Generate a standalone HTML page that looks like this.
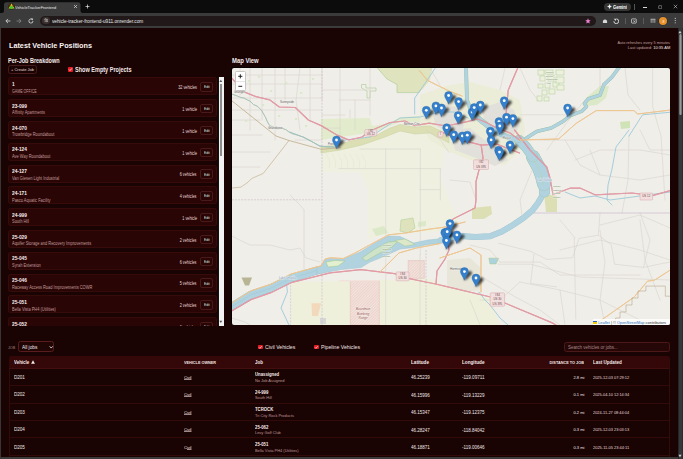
<!DOCTYPE html>
<html><head><meta charset="utf-8">
<style>
*{box-sizing:border-box;margin:0;padding:0}
html,body{width:683px;height:459px;overflow:hidden;background:#190303;font-family:"Liberation Sans",sans-serif}
.a{position:absolute;white-space:nowrap;line-height:1}
.b{font-weight:bold}
</style></head><body>
<div class="a" style="left:0.00px;top:0.00px;width:683.00px;height:13.20px;background:#0c0c0c"></div>
<div class="a" style="left:0.00px;top:13.00px;width:683.00px;height:15.00px;background:#3b3b3b"></div>
<svg class="a" style="left:0;top:0" width="100" height="14" viewBox="0 0 100 14"><path d="M1,13.2 Q4,13.2 4,10.5 L4,4.5 Q4,2.2 6.5,2.2 L78,2.2 Q80.5,2.2 80.5,4.5 L80.5,10.5 Q80.5,13.2 83.5,13.2 Z" fill="#3b3b3b"/></svg>
<svg class="a" style="left:8.2px;top:3.2px" width="7" height="7" viewBox="0 0 10 10"><circle cx="5" cy="5" r="4.8" fill="#2c2c12"/><path d="M5,0.6 L9.2,8 L0.8,8 Z" fill="#e0c020"/><circle cx="5" cy="6.2" r="2.3" fill="#3ccc30"/><path d="M2,2.5 L4,4.5 M8,2.5 L6,4.5" stroke="#c03030" stroke-width="1"/></svg>
<div class="a" style="left:14.60px;top:5.60px;font-size:4.3px;font-weight:normal;color:#e8e8e8;transform-origin:left center;transform:scaleX(0.908);">VehicleTrackerFrontend</div>
<svg class="a" style="left:73.2px;top:4.3px" width="5" height="5" viewBox="0 0 10 10"><path d="M2,2 L8,8 M8,2 L2,8" stroke="#d8d8d8" stroke-width="1.4"/></svg>
<svg class="a" style="left:84.8px;top:4.1px" width="5" height="5" viewBox="0 0 10 10"><path d="M5,1 L5,9 M1,5 L9,5" stroke="#e8e8e8" stroke-width="1.4"/></svg>
<div class="a" style="left:604.40px;top:2.50px;width:26.40px;height:8.30px;background:#363636;border-radius:4px"></div>
<svg class="a" style="left:607.2px;top:4.1px" width="5.2" height="5.2" viewBox="0 0 10 10"><path d="M5,0 Q5.6,4.4 10,5 Q5.6,5.6 5,10 Q4.4,5.6 0,5 Q4.4,4.4 5,0Z" fill="#f0f0f0"/></svg>
<div class="a" style="left:613.20px;top:6.14px;font-size:4.7px;font-weight:bold;color:#ffffff;transform-origin:left center;transform:scaleX(0.875);">Gemini</div>
<div class="a" style="left:634.30px;top:4.00px;width:0.50px;height:5.50px;background:#555"></div>
<div class="a" style="left:643.00px;top:6.50px;width:4.00px;height:0.35px;background:#d8d8d8"></div>
<svg class="a" style="left:657.8px;top:4.5px" width="4.4" height="4.4" viewBox="0 0 10 10"><rect x="1.5" y="1.5" width="7" height="7" rx="1" fill="none" stroke="#d8d8d8" stroke-width="1"/></svg>
<svg class="a" style="left:672.5px;top:4.2px" width="5" height="5" viewBox="0 0 10 10"><path d="M1.5,1.5 L8.5,8.5 M8.5,1.5 L1.5,8.5" stroke="#d8d8d8" stroke-width="1.1"/></svg>
<svg class="a" style="left:4.5px;top:17.7px" width="6" height="6" viewBox="0 0 10 10"><path d="M9,5 L1.5,5 M5,1.5 L1.5,5 L5,8.5" fill="none" stroke="#e0e0e0" stroke-width="1.3"/></svg>
<svg class="a" style="left:16.3px;top:17.7px" width="6" height="6" viewBox="0 0 10 10"><path d="M1,5 L8.5,5 M5,1.5 L8.5,5 L5,8.5" fill="none" stroke="#8a8a8a" stroke-width="1.3"/></svg>
<svg class="a" style="left:28.2px;top:17.7px" width="6" height="6" viewBox="0 0 10 10"><path d="M8.3,5 A3.4,3.4 0 1 1 6.6,2.1" fill="none" stroke="#e0e0e0" stroke-width="1.3"/><path d="M5.2,0.3 L8.8,1.2 L7,4.2 Z" fill="#e0e0e0"/></svg>
<div class="a" style="left:40.40px;top:15.70px;width:555.30px;height:10.10px;background:#211919;border-radius:5px"></div>
<div class="a" style="left:41.80px;top:16.60px;width:7.80px;height:7.80px;background:#3a3030;border-radius:50%"></div>
<svg class="a" style="left:43.5px;top:18.4px" width="4.5" height="4.5" viewBox="0 0 10 10"><path d="M1,3 L9,3 M1,7 L9,7" stroke="#e0e0e0" stroke-width="1.2"/><circle cx="3.5" cy="3" r="1.5" fill="#3a3030" stroke="#e0e0e0" stroke-width="1"/><circle cx="6.5" cy="7" r="1.5" fill="#3a3030" stroke="#e0e0e0" stroke-width="1"/></svg>
<div class="a" style="left:51.80px;top:20.31px;font-size:4.8px;font-weight:normal;color:#ececec;transform-origin:left center;transform:scaleX(0.981);">vehicle-tracker-frontend-u911.onrender.com</div>
<svg class="a" style="left:584.5px;top:17.9px" width="6" height="6" viewBox="0 0 10 10"><path d="M5,0.5 L6.3,3.6 L9.6,3.8 L7,6 L7.9,9.3 L5,7.5 L2.1,9.3 L3,6 L0.4,3.8 L3.7,3.6 Z" fill="#f383d4"/></svg>
<svg class="a" style="left:601.5px;top:17.9px" width="6" height="6" viewBox="0 0 10 10"><path d="M1.5,8.5 L1.5,4.5 Q5,0.5 8.5,4.5 L8.5,8.5 Z" fill="#d8d8d8"/></svg>
<svg class="a" style="left:612.5px;top:17.6px" width="6.5" height="6.5" viewBox="0 0 10 10"><path d="M5,1.3 A3.7,3.7 0 1 1 1.3,5" fill="none" stroke="#e0e0e0" stroke-width="1.4"/><path d="M1,1 L4.5,1 L4.5,4.5 Z" fill="#e0e0e0"/></svg>
<div class="a" style="left:624.60px;top:18.00px;width:0.50px;height:5.50px;background:#5a5a5a"></div>
<svg class="a" style="left:630.5px;top:17.8px" width="6" height="6" viewBox="0 0 10 10"><rect x="0.8" y="1.5" width="8" height="7" rx="1" fill="none" stroke="#e0e0e0" stroke-width="1.2"/><path d="M4,4 L7,7 M7,4 L4,7" stroke="#e0e0e0" stroke-width="1"/></svg>
<div class="a" style="left:642.70px;top:18.00px;width:0.50px;height:5.50px;background:#5a5a5a"></div>
<svg class="a" style="left:649.5px;top:17.8px" width="6" height="6" viewBox="0 0 10 10"><path d="M1,2 L9,2 M2,2 L2,8 M5,2 L5,8 M8,2 L8,8" stroke="#d8d8d8" stroke-width="1.1"/></svg>
<div class="a" style="left:659.30px;top:16.60px;width:8.20px;height:8.20px;background:#e8912c;border-radius:50%;box-shadow:0 0 0 0.6px #1c2a3a"></div>
<div class="a" style="left:662.50px;top:20.80px;font-size:3.3px;font-weight:normal;color:#fff2e0;transform-origin:left center;transform:scaleX(1.000);">8</div>
<svg class="a" style="left:673.8px;top:17.4px" width="2.5" height="7" viewBox="0 0 4 10"><circle cx="2" cy="1.5" r="0.9" fill="#ddd"/><circle cx="2" cy="5" r="0.9" fill="#ddd"/><circle cx="2" cy="8.5" r="0.9" fill="#ddd"/></svg>
<div class="a" style="left:0.00px;top:28.00px;width:683.00px;height:431.00px;background:#190303"></div>
<div class="a" style="left:0.00px;top:28.00px;width:1.20px;height:431.00px;background:#3a3434"></div>
<div class="a" style="left:677.90px;top:28.00px;width:5.10px;height:431.00px;background:linear-gradient(90deg,#1c1c1c,#343838 30%,#343838 80%,#222)"></div>
<div class="a" style="left:678.90px;top:34.20px;width:3.60px;height:81.00px;background:linear-gradient(90deg,#5a5a5a,#9a9a9a 45%,#9a9a9a 55%,#5a5a5a);border-radius:1.8px"></div>
<svg class="a" style="left:678.4px;top:29.5px" width="4" height="4" viewBox="0 0 10 10"><path d="M5,2 L9,8 L1,8 Z" fill="#cfcfcf"/></svg>
<svg class="a" style="left:678.4px;top:453.5px" width="4" height="4" viewBox="0 0 10 10"><path d="M5,8 L9,2 L1,2 Z" fill="#cfcfcf"/></svg>
<div class="a" style="left:8.50px;top:42.00px;font-size:8.0px;font-weight:bold;color:#faf4f4;transform-origin:left center;transform:scaleX(0.906);">Latest Vehicle Positions</div>
<div class="a" style="right:12.60px;top:41.10px;font-size:4.2px;font-weight:normal;color:#c4a2a2;transform-origin:right center;transform:scaleX(0.906);">Auto refreshes every 5 minutes</div>
<div class="a" style="right:12.60px;top:46.30px;font-size:4.2px;font-weight:normal;color:#c4a2a2;transform-origin:right center;transform:scaleX(0.960);">Last updated: <span style="color:#f0e4e4">10:35 AM</span></div>
<div class="a" style="left:8.40px;top:58.10px;font-size:6.3px;font-weight:bold;color:#f6ecec;transform-origin:left center;transform:scaleX(0.871);">Per-Job Breakdown</div>
<div class="a" style="left:231.60px;top:58.15px;font-size:6.3px;font-weight:bold;color:#f6ecec;transform-origin:left center;transform:scaleX(0.934);">Map View</div>
<div class="a" style="left:8.40px;top:64.70px;width:29.00px;height:8.90px;border:0.8px solid #4a1a1a;border-radius:2.5px"></div>
<div class="a" style="left:11.40px;top:69.40px;font-size:3.8px;font-weight:normal;color:#eadede;transform-origin:left center;transform:scaleX(1.052);">+ Create Job</div>
<div class="a" style="left:68.20px;top:67.10px;width:4.90px;height:4.90px;background:#e31b23;border-radius:0.8px"></div>
<svg class="a" style="left:68.2px;top:67.1px" width="4.9" height="4.9" viewBox="0 0 10 10"><path d="M2.2,5.2 L4.2,7.2 L8,2.8" fill="none" stroke="#fff" stroke-width="1.5"/></svg>
<div class="a" style="left:75.20px;top:67.05px;font-size:6.4px;font-weight:bold;color:#f2e8e8;transform-origin:left center;transform:scaleX(0.865);">Show Empty Projects</div>
<div class="a" style="left:0;top:77px;width:230px;height:248.8px;overflow:hidden">
<div class="a" style="left:7.9px;top:0.30px;width:208.7px;height:18.1px;background:#290505;border:0.7px solid #380b0b;border-radius:2.2px"></div>
<div class="a" style="left:12.30px;top:6.09px;font-size:4.9px;font-weight:bold;color:#f6eeee;transform-origin:left center;transform:scaleX(0.980);">1</div>
<div class="a" style="left:12.30px;top:12.64px;font-size:4.55px;font-weight:normal;color:#c29a9a;transform-origin:left center;transform:scaleX(0.790);">GAME OFFICE</div>
<div class="a" style="right:33.20px;top:9.11px;font-size:4.6px;font-weight:normal;color:#eadada;transform-origin:right center;transform:scaleX(0.817);">32 vehicles</div>
<div class="a" style="left:200.4px;top:5.10px;width:12.9px;height:9.5px;border:0.9px solid #4a1a1a;border-radius:2px"></div>
<div class="a" style="left:204.10px;top:8.30px;font-size:4.0px;font-weight:normal;color:#dce8e8;transform-origin:left center;transform:scaleX(0.820);">Edit</div>
<div class="a" style="left:7.9px;top:22.10px;width:208.7px;height:18.1px;background:#290505;border:0.7px solid #380b0b;border-radius:2.2px"></div>
<div class="a" style="left:12.30px;top:27.89px;font-size:4.9px;font-weight:bold;color:#f6eeee;transform-origin:left center;transform:scaleX(0.980);">23-099</div>
<div class="a" style="left:12.30px;top:34.44px;font-size:4.55px;font-weight:normal;color:#c29a9a;transform-origin:left center;transform:scaleX(0.870);">Affinity Apartments</div>
<div class="a" style="right:33.20px;top:30.91px;font-size:4.6px;font-weight:normal;color:#eadada;transform-origin:right center;transform:scaleX(0.817);">1 vehicle</div>
<div class="a" style="left:200.4px;top:26.90px;width:12.9px;height:9.5px;border:0.9px solid #4a1a1a;border-radius:2px"></div>
<div class="a" style="left:204.10px;top:30.10px;font-size:4.0px;font-weight:normal;color:#dce8e8;transform-origin:left center;transform:scaleX(0.820);">Edit</div>
<div class="a" style="left:7.9px;top:43.90px;width:208.7px;height:18.1px;background:#290505;border:0.7px solid #380b0b;border-radius:2.2px"></div>
<div class="a" style="left:12.30px;top:49.69px;font-size:4.9px;font-weight:bold;color:#f6eeee;transform-origin:left center;transform:scaleX(0.980);">24-070</div>
<div class="a" style="left:12.30px;top:56.24px;font-size:4.55px;font-weight:normal;color:#c29a9a;transform-origin:left center;transform:scaleX(0.870);">Trowbridge Roundabout</div>
<div class="a" style="right:33.20px;top:52.71px;font-size:4.6px;font-weight:normal;color:#eadada;transform-origin:right center;transform:scaleX(0.817);">1 vehicle</div>
<div class="a" style="left:200.4px;top:48.70px;width:12.9px;height:9.5px;border:0.9px solid #4a1a1a;border-radius:2px"></div>
<div class="a" style="left:204.10px;top:51.90px;font-size:4.0px;font-weight:normal;color:#dce8e8;transform-origin:left center;transform:scaleX(0.820);">Edit</div>
<div class="a" style="left:7.9px;top:65.70px;width:208.7px;height:18.1px;background:#290505;border:0.7px solid #380b0b;border-radius:2.2px"></div>
<div class="a" style="left:12.30px;top:71.49px;font-size:4.9px;font-weight:bold;color:#f6eeee;transform-origin:left center;transform:scaleX(0.980);">24-124</div>
<div class="a" style="left:12.30px;top:78.04px;font-size:4.55px;font-weight:normal;color:#c29a9a;transform-origin:left center;transform:scaleX(0.870);">Ave Way Roundabout</div>
<div class="a" style="right:33.20px;top:74.51px;font-size:4.6px;font-weight:normal;color:#eadada;transform-origin:right center;transform:scaleX(0.817);">1 vehicle</div>
<div class="a" style="left:200.4px;top:70.50px;width:12.9px;height:9.5px;border:0.9px solid #4a1a1a;border-radius:2px"></div>
<div class="a" style="left:204.10px;top:73.70px;font-size:4.0px;font-weight:normal;color:#dce8e8;transform-origin:left center;transform:scaleX(0.820);">Edit</div>
<div class="a" style="left:7.9px;top:87.50px;width:208.7px;height:18.1px;background:#290505;border:0.7px solid #380b0b;border-radius:2.2px"></div>
<div class="a" style="left:12.30px;top:93.29px;font-size:4.9px;font-weight:bold;color:#f6eeee;transform-origin:left center;transform:scaleX(0.980);">24-127</div>
<div class="a" style="left:12.30px;top:99.84px;font-size:4.55px;font-weight:normal;color:#c29a9a;transform-origin:left center;transform:scaleX(0.870);">Van Giesen Light Industrial</div>
<div class="a" style="right:33.20px;top:96.31px;font-size:4.6px;font-weight:normal;color:#eadada;transform-origin:right center;transform:scaleX(0.817);">6 vehicles</div>
<div class="a" style="left:200.4px;top:92.30px;width:12.9px;height:9.5px;border:0.9px solid #4a1a1a;border-radius:2px"></div>
<div class="a" style="left:204.10px;top:95.50px;font-size:4.0px;font-weight:normal;color:#dce8e8;transform-origin:left center;transform:scaleX(0.820);">Edit</div>
<div class="a" style="left:7.9px;top:109.30px;width:208.7px;height:18.1px;background:#290505;border:0.7px solid #380b0b;border-radius:2.2px"></div>
<div class="a" style="left:12.30px;top:115.09px;font-size:4.9px;font-weight:bold;color:#f6eeee;transform-origin:left center;transform:scaleX(0.980);">24-171</div>
<div class="a" style="left:12.30px;top:121.64px;font-size:4.55px;font-weight:normal;color:#c29a9a;transform-origin:left center;transform:scaleX(0.870);">Pasco Aquatic Facility</div>
<div class="a" style="right:33.20px;top:118.11px;font-size:4.6px;font-weight:normal;color:#eadada;transform-origin:right center;transform:scaleX(0.817);">4 vehicles</div>
<div class="a" style="left:200.4px;top:114.10px;width:12.9px;height:9.5px;border:0.9px solid #4a1a1a;border-radius:2px"></div>
<div class="a" style="left:204.10px;top:117.30px;font-size:4.0px;font-weight:normal;color:#dce8e8;transform-origin:left center;transform:scaleX(0.820);">Edit</div>
<div class="a" style="left:7.9px;top:131.10px;width:208.7px;height:18.1px;background:#290505;border:0.7px solid #380b0b;border-radius:2.2px"></div>
<div class="a" style="left:12.30px;top:136.89px;font-size:4.9px;font-weight:bold;color:#f6eeee;transform-origin:left center;transform:scaleX(0.980);">24-999</div>
<div class="a" style="left:12.30px;top:143.44px;font-size:4.55px;font-weight:normal;color:#c29a9a;transform-origin:left center;transform:scaleX(0.870);">South Hill</div>
<div class="a" style="right:33.20px;top:139.91px;font-size:4.6px;font-weight:normal;color:#eadada;transform-origin:right center;transform:scaleX(0.817);">1 vehicle</div>
<div class="a" style="left:200.4px;top:135.90px;width:12.9px;height:9.5px;border:0.9px solid #4a1a1a;border-radius:2px"></div>
<div class="a" style="left:204.10px;top:139.10px;font-size:4.0px;font-weight:normal;color:#dce8e8;transform-origin:left center;transform:scaleX(0.820);">Edit</div>
<div class="a" style="left:7.9px;top:152.90px;width:208.7px;height:18.1px;background:#290505;border:0.7px solid #380b0b;border-radius:2.2px"></div>
<div class="a" style="left:12.30px;top:158.69px;font-size:4.9px;font-weight:bold;color:#f6eeee;transform-origin:left center;transform:scaleX(0.980);">25-029</div>
<div class="a" style="left:12.30px;top:165.24px;font-size:4.55px;font-weight:normal;color:#c29a9a;transform-origin:left center;transform:scaleX(0.870);">Aquifer Storage and Recovery Improvements</div>
<div class="a" style="right:33.20px;top:161.71px;font-size:4.6px;font-weight:normal;color:#eadada;transform-origin:right center;transform:scaleX(0.817);">2 vehicles</div>
<div class="a" style="left:200.4px;top:157.70px;width:12.9px;height:9.5px;border:0.9px solid #4a1a1a;border-radius:2px"></div>
<div class="a" style="left:204.10px;top:160.90px;font-size:4.0px;font-weight:normal;color:#dce8e8;transform-origin:left center;transform:scaleX(0.820);">Edit</div>
<div class="a" style="left:7.9px;top:174.70px;width:208.7px;height:18.1px;background:#290505;border:0.7px solid #380b0b;border-radius:2.2px"></div>
<div class="a" style="left:12.30px;top:180.49px;font-size:4.9px;font-weight:bold;color:#f6eeee;transform-origin:left center;transform:scaleX(0.980);">25-045</div>
<div class="a" style="left:12.30px;top:187.04px;font-size:4.55px;font-weight:normal;color:#c29a9a;transform-origin:left center;transform:scaleX(0.870);">Syrah Extension</div>
<div class="a" style="right:33.20px;top:183.51px;font-size:4.6px;font-weight:normal;color:#eadada;transform-origin:right center;transform:scaleX(0.817);">6 vehicles</div>
<div class="a" style="left:200.4px;top:179.50px;width:12.9px;height:9.5px;border:0.9px solid #4a1a1a;border-radius:2px"></div>
<div class="a" style="left:204.10px;top:182.70px;font-size:4.0px;font-weight:normal;color:#dce8e8;transform-origin:left center;transform:scaleX(0.820);">Edit</div>
<div class="a" style="left:7.9px;top:196.50px;width:208.7px;height:18.1px;background:#290505;border:0.7px solid #380b0b;border-radius:2.2px"></div>
<div class="a" style="left:12.30px;top:202.29px;font-size:4.9px;font-weight:bold;color:#f6eeee;transform-origin:left center;transform:scaleX(0.980);">25-046</div>
<div class="a" style="left:12.30px;top:208.84px;font-size:4.55px;font-weight:normal;color:#c29a9a;transform-origin:left center;transform:scaleX(0.870);">Raceway Access Road Improvements COWR</div>
<div class="a" style="right:33.20px;top:205.31px;font-size:4.6px;font-weight:normal;color:#eadada;transform-origin:right center;transform:scaleX(0.817);">5 vehicles</div>
<div class="a" style="left:200.4px;top:201.30px;width:12.9px;height:9.5px;border:0.9px solid #4a1a1a;border-radius:2px"></div>
<div class="a" style="left:204.10px;top:204.50px;font-size:4.0px;font-weight:normal;color:#dce8e8;transform-origin:left center;transform:scaleX(0.820);">Edit</div>
<div class="a" style="left:7.9px;top:218.30px;width:208.7px;height:18.1px;background:#290505;border:0.7px solid #380b0b;border-radius:2.2px"></div>
<div class="a" style="left:12.30px;top:224.09px;font-size:4.9px;font-weight:bold;color:#f6eeee;transform-origin:left center;transform:scaleX(0.980);">25-051</div>
<div class="a" style="left:12.30px;top:230.64px;font-size:4.55px;font-weight:normal;color:#c29a9a;transform-origin:left center;transform:scaleX(0.870);">Bella Vista PH4 (Utilities)</div>
<div class="a" style="right:33.20px;top:227.11px;font-size:4.6px;font-weight:normal;color:#eadada;transform-origin:right center;transform:scaleX(0.817);">2 vehicles</div>
<div class="a" style="left:200.4px;top:223.10px;width:12.9px;height:9.5px;border:0.9px solid #4a1a1a;border-radius:2px"></div>
<div class="a" style="left:204.10px;top:226.30px;font-size:4.0px;font-weight:normal;color:#dce8e8;transform-origin:left center;transform:scaleX(0.820);">Edit</div>
<div class="a" style="left:7.9px;top:240.10px;width:208.7px;height:18.1px;background:#290505;border:0.7px solid #380b0b;border-radius:2.2px"></div>
<div class="a" style="left:12.30px;top:245.89px;font-size:4.9px;font-weight:bold;color:#f6eeee;transform-origin:left center;transform:scaleX(0.980);">25-052</div>
<div class="a" style="left:12.30px;top:252.44px;font-size:4.55px;font-weight:normal;color:#c29a9a;transform-origin:left center;transform:scaleX(0.870);">Columbia Park Trail</div>
<div class="a" style="right:33.20px;top:248.91px;font-size:4.6px;font-weight:normal;color:#eadada;transform-origin:right center;transform:scaleX(0.817);">6 vehicles</div>
<div class="a" style="left:200.4px;top:244.90px;width:12.9px;height:9.5px;border:0.9px solid #4a1a1a;border-radius:2px"></div>
<div class="a" style="left:204.10px;top:248.10px;font-size:4.0px;font-weight:normal;color:#dce8e8;transform-origin:left center;transform:scaleX(0.820);">Edit</div>
<div class="a" style="left:218.1px;top:0;width:6.2px;height:248.8px;background:#111"></div>
<div class="a" style="left:218.5px;top:0;width:5.4px;height:248.8px;background:#f2f2f2"></div>
<div class="a" style="left:220.2px;top:7.4px;width:2.3px;height:71.8px;background:#8c8c8c"></div>
<svg class="a" style="left:219.4px;top:1.6px" width="3.6" height="3.6" viewBox="0 0 10 10"><path d="M5,2 L9,8 L1,8 Z" fill="#505050"/></svg>
<svg class="a" style="left:219.4px;top:243.4px" width="3.6" height="3.6" viewBox="0 0 10 10"><path d="M5,8 L9,2 L1,2 Z" fill="#505050"/></svg>
</div>
<div class="a" style="left:231.2px;top:66.9px;width:439.2px;height:258.2px;background:#060000;border-radius:2.5px"></div>
<div class="a" id="map" style="left:231.8px;top:67.5px;width:438px;height:257px;background:#f0eee9;border-radius:2px;overflow:hidden"><svg style="position:absolute;left:-231.8px;top:-67.5px" width="683" height="459" viewBox="0 0 683 459" font-family="Liberation Sans"><defs><filter id="blur" x="-50%" y="-50%" width="200%" height="200%"><feGaussianBlur stdDeviation="0.9"/></filter><pattern id="hatch" width="2" height="2" patternUnits="userSpaceOnUse" patternTransform="rotate(45)"><rect width="2" height="2" fill="#f3e4de"/><rect width="0.6" height="2" fill="#e8c8c0"/></pattern></defs><path d="M321.0,147.0 L360.0,140.0 L400.0,125.0 L430.0,127.0 L449.0,133.0 L445.0,150.0 L440.0,175.0 L449.0,200.0 L460.0,222.0 L440.0,232.0 L400.0,233.0 L380.0,236.0 L368.0,240.0 L368.0,190.0 L360.0,172.0 L321.0,172.0 Z" fill="#eff0e0" stroke="none" stroke-width="0" />
<path d="M290.6,282.0 L430.0,279.0 L449.0,287.0 L470.0,292.0 L490.0,298.0 L500.0,325.0 L290.6,325.0 Z" fill="#eff0dc" stroke="none" stroke-width="0" />
<path d="M321.0,119.0 L370.0,118.0 L372.0,126.0 L390.0,123.0 L400.0,117.0 L420.0,116.0 L430.0,104.0 L425.0,95.0 L440.0,90.0 L449.0,95.0 L440.0,115.0 L430.0,123.0 L400.0,122.0 L380.0,130.0 L362.0,134.0 L340.0,137.0 L321.0,140.0 Z" fill="#e3ebcd" stroke="none" stroke-width="0" />
<path d="M420.0,95.0 L445.0,86.0 L470.0,82.0 L500.0,90.0 L520.0,100.0 L525.0,130.0 L520.0,150.0 L505.0,165.0 L470.0,160.0 L450.0,152.0 L430.0,140.0 L420.0,125.0 Z" fill="#ecedd8" stroke="none" stroke-width="0" />
<path d="M432.0,112.0 L445.0,104.0 L458.0,108.0 L466.0,120.0 L462.0,130.0 L448.0,132.0 L436.0,126.0 Z" fill="#e2e0da" stroke="none" stroke-width="0" />
<path d="M450.0,130.0 L470.0,128.0 L482.0,138.0 L500.0,150.0 L508.0,160.0 L495.0,166.0 L476.0,158.0 L455.0,150.0 Z" fill="#e2e0da" stroke="none" stroke-width="0" />
<path d="M482.0,108.0 L500.0,102.0 L514.0,110.0 L520.0,126.0 L510.0,140.0 L496.0,138.0 L485.0,125.0 Z" fill="#e2e0da" stroke="none" stroke-width="0" />
<path d="M447.0,260.0 L470.0,258.0 L481.0,268.0 L481.0,290.0 L465.0,292.0 L447.0,285.0 Z" fill="#e7e6d8" stroke="none" stroke-width="0" />
<path d="M321.0,147.0 L340.0,144.0 L355.0,140.0 L375.0,136.0 L390.0,128.0 L400.0,124.5 L415.0,127.0 L430.0,126.0 L445.0,133.0 L449.0,138.0 L449.0,143.0 L430.0,133.0 L415.0,134.0 L400.0,131.0 L385.0,137.0 L362.0,145.0 L340.0,150.0 L321.0,153.0 Z" fill="#dcdfb4" stroke="#c7d09c" stroke-width="0.5" />
<path d="M326.0,153.0 L330.0,162.0 L329.0,168.0" fill="none" stroke="#e2e4c6" stroke-width="0.45" stroke-linejoin="round" stroke-linecap="round" />
<path d="M332.0,153.3 L336.0,162.0 L335.0,168.0" fill="none" stroke="#e2e4c6" stroke-width="0.45" stroke-linejoin="round" stroke-linecap="round" />
<path d="M338.0,153.6 L342.0,162.0 L341.0,168.0" fill="none" stroke="#e2e4c6" stroke-width="0.45" stroke-linejoin="round" stroke-linecap="round" />
<path d="M344.0,153.9 L348.0,162.0 L347.0,168.0" fill="none" stroke="#e2e4c6" stroke-width="0.45" stroke-linejoin="round" stroke-linecap="round" />
<path d="M350.0,154.2 L354.0,162.0 L353.0,168.0" fill="none" stroke="#e2e4c6" stroke-width="0.45" stroke-linejoin="round" stroke-linecap="round" />
<path d="M356.0,154.5 L360.0,162.0 L359.0,168.0" fill="none" stroke="#e2e4c6" stroke-width="0.45" stroke-linejoin="round" stroke-linecap="round" />
<path d="M362.0,154.8 L366.0,162.0 L365.0,168.0" fill="none" stroke="#e2e4c6" stroke-width="0.45" stroke-linejoin="round" stroke-linecap="round" />
<path d="M377.0,67.5 L432.0,67.5 L426.0,81.0 L419.0,92.6 L397.0,92.6 L397.0,84.5 L387.0,79.0 Z" fill="#dfe3be" stroke="#a9c98e" stroke-width="0.6" />
<path d="M415.0,67.5 L432.0,67.5 L430.0,80.0 L422.0,90.0 L415.0,88.0 Z" fill="#dfe3be" stroke="none" stroke-width="0" />
<path d="M361.5,84.5 L366.0,84.5 L366.0,88.0 L376.0,88.0 L376.0,91.0 L370.0,91.0 L370.0,98.0 L367.0,98.0 L367.0,91.0 L361.5,88.0 Z" fill="none" stroke="#a9c98e" stroke-width="0.6" />
<rect x="538" y="70" width="6" height="5" fill="#edf0dc" stroke="#b3cf99" stroke-width="0.55"/>
<rect x="545" y="70" width="8" height="4" fill="#edf0dc" stroke="#b3cf99" stroke-width="0.55"/>
<rect x="540" y="76" width="5" height="5" fill="#edf0dc" stroke="#b3cf99" stroke-width="0.55"/>
<rect x="548" y="75" width="6" height="6" fill="#edf0dc" stroke="#b3cf99" stroke-width="0.55"/>
<rect x="538" y="84" width="5" height="4" fill="#edf0dc" stroke="#b3cf99" stroke-width="0.55"/>
<rect x="545" y="83" width="5" height="5" fill="#edf0dc" stroke="#b3cf99" stroke-width="0.55"/>
<rect x="553" y="82" width="6" height="5" fill="#edf0dc" stroke="#b3cf99" stroke-width="0.55"/>
<rect x="542" y="90" width="5" height="5" fill="#edf0dc" stroke="#b3cf99" stroke-width="0.55"/>
<rect x="549" y="89" width="6" height="5" fill="#edf0dc" stroke="#b3cf99" stroke-width="0.55"/>
<rect x="537" y="96" width="5" height="5" fill="#edf0dc" stroke="#b3cf99" stroke-width="0.55"/>
<rect x="544" y="97" width="5" height="4" fill="#edf0dc" stroke="#b3cf99" stroke-width="0.55"/>
<rect x="556" y="70" width="8" height="5" fill="#edf0dc" stroke="#b3cf99" stroke-width="0.55"/>
<rect x="556" y="77" width="8" height="6" fill="#edf0dc" stroke="#b3cf99" stroke-width="0.55"/>
<rect x="557" y="85" width="7" height="5" fill="#edf0dc" stroke="#b3cf99" stroke-width="0.55"/>
<path d="M401.0,220.0 L413.0,218.0 L415.0,228.0 L408.0,233.0 L400.0,231.0 Z" fill="#dfe3bd" stroke="#a9c98e" stroke-width="0.5" />
<path d="M418.0,222.0 L426.0,221.0 L426.0,226.0 L418.0,227.0 Z" fill="#dbe9c8" stroke="none" stroke-width="0" />
<path d="M372.0,229.0 L384.0,226.0 L388.0,233.0 L376.0,236.0 Z" fill="#dbe9c8" stroke="none" stroke-width="0" />
<path d="M587.0,97.0 L600.0,86.0 L609.0,86.0 L606.0,98.0 L597.0,105.0 L587.0,106.0 Z" fill="#dbe9c8" stroke="none" stroke-width="0" />
<path d="M472.0,208.0 L491.0,206.0 L492.0,214.0 L484.0,219.0 L472.0,219.0 Z" fill="#dcdfb4" stroke="none" stroke-width="0" />
<path d="M544.0,194.0 L557.0,196.0 L557.0,212.0 L546.0,212.0 Z" fill="#dcdfb4" stroke="none" stroke-width="0" />
<path d="M620.0,122.0 L630.0,121.0 L630.0,128.0 L621.0,129.0 Z" fill="#cfe3b6" stroke="none" stroke-width="0" />
<path d="M350.3,280.8 L379.3,280.8 L379.3,325.0 L350.3,325.0 Z" fill="url(#hatch)" stroke="#e3b9b0" stroke-width="0.5" />
<path d="M339.0,280.0 L379.0,280.0 L379.0,281.6 L339.0,281.6 Z" fill="#f2e2dc" stroke="none" stroke-width="0" />
<path d="M408.2,260.6 L424.3,260.6 L424.3,278.3 L408.2,278.3 Z" fill="url(#hatch)" stroke="#e3b9b0" stroke-width="0.5" />
<path d="M241.5,277.5 L252.0,277.5 L249.0,285.6 L245.0,285.6 Z" fill="#b7b594" stroke="none" stroke-width="0" />
<path d="M311.5,303.3 L321.2,303.3 L318.0,316.0 L312.0,316.0 Z" fill="#f3d9bb" stroke="none" stroke-width="0" />
<path d="M488.9,258.2 L498.5,258.2 L496.0,263.9 L490.0,263.9 Z" fill="#aad3df" stroke="#a9c98e" stroke-width="0.6" />
<rect x="320" y="318" width="6" height="6" fill="#d6d6d6"/>
<path d="M231.6,84.0 L322.0,84.0" fill="none" stroke="#d5d1ca" stroke-width="0.55" stroke-linejoin="round" stroke-linecap="round" />
<path d="M250.0,68.0 L250.0,130.0" fill="none" stroke="#d5d1ca" stroke-width="0.55" stroke-linejoin="round" stroke-linecap="round" />
<path d="M262.0,68.0 L262.0,120.0" fill="none" stroke="#d5d1ca" stroke-width="0.55" stroke-linejoin="round" stroke-linecap="round" />
<path d="M275.0,68.0 L275.0,140.0" fill="none" stroke="#d5d1ca" stroke-width="0.55" stroke-linejoin="round" stroke-linecap="round" />
<path d="M231.6,110.0 L322.0,110.0" fill="none" stroke="#d5d1ca" stroke-width="0.55" stroke-linejoin="round" stroke-linecap="round" />
<path d="M300.0,68.0 L296.0,100.0 L300.0,130.0" fill="none" stroke="#d5d1ca" stroke-width="0.55" stroke-linejoin="round" stroke-linecap="round" />
<path d="M310.0,68.0 L310.0,122.0" fill="none" stroke="#d5d1ca" stroke-width="0.55" stroke-linejoin="round" stroke-linecap="round" />
<path d="M231.6,98.0 L322.0,98.0" fill="none" stroke="#d5d1ca" stroke-width="0.55" stroke-linejoin="round" stroke-linecap="round" />
<path d="M322.0,128.0 L340.0,128.0 L340.0,150.0" fill="none" stroke="#d5d1ca" stroke-width="0.55" stroke-linejoin="round" stroke-linecap="round" />
<path d="M360.0,149.0 L419.5,149.0" fill="none" stroke="#d5d1ca" stroke-width="0.55" stroke-linejoin="round" stroke-linecap="round" />
<path d="M385.7,149.0 L385.7,325.0" fill="none" stroke="#d5d1ca" stroke-width="0.55" stroke-linejoin="round" stroke-linecap="round" />
<path d="M420.3,149.0 L420.3,255.0" fill="none" stroke="#d5d1ca" stroke-width="0.55" stroke-linejoin="round" stroke-linecap="round" />
<path d="M339.0,168.6 L440.4,168.6" fill="none" stroke="#d5d1ca" stroke-width="0.55" stroke-linejoin="round" stroke-linecap="round" />
<path d="M440.4,168.6 L440.4,200.0" fill="none" stroke="#d5d1ca" stroke-width="0.55" stroke-linejoin="round" stroke-linecap="round" />
<path d="M420.0,189.6 L440.0,189.6" fill="none" stroke="#d5d1ca" stroke-width="0.55" stroke-linejoin="round" stroke-linecap="round" />
<path d="M426.0,130.0 L440.4,139.7 L449.0,152.5" fill="none" stroke="#d5d1ca" stroke-width="0.55" stroke-linejoin="round" stroke-linecap="round" />
<path d="M231.6,236.0 L250.0,245.0 L270.0,245.0 L290.0,250.0 L300.0,248.0 L306.0,258.0 L320.0,262.0" fill="none" stroke="#d5d1ca" stroke-width="0.55" stroke-linejoin="round" stroke-linecap="round" />
<path d="M304.0,210.0 L304.0,270.0" fill="none" stroke="#d5d1ca" stroke-width="0.55" stroke-linejoin="round" stroke-linecap="round" />
<path d="M290.0,195.0 L300.0,205.0 L304.0,210.0" fill="none" stroke="#d5d1ca" stroke-width="0.55" stroke-linejoin="round" stroke-linecap="round" />
<path d="M231.6,318.0 L245.0,322.0 L250.0,325.0" fill="none" stroke="#d5d1ca" stroke-width="0.55" stroke-linejoin="round" stroke-linecap="round" />
<path d="M538.0,156.0 L520.0,200.0 L522.0,215.0" fill="none" stroke="#d5d1ca" stroke-width="0.55" stroke-linejoin="round" stroke-linecap="round" />
<path d="M600.0,225.0 L640.0,215.0 L670.0,228.0" fill="none" stroke="#d5d1ca" stroke-width="0.55" stroke-linejoin="round" stroke-linecap="round" />
<path d="M560.0,250.0 L600.0,240.0 L640.0,250.0 L670.0,260.0" fill="none" stroke="#d5d1ca" stroke-width="0.55" stroke-linejoin="round" stroke-linecap="round" />
<path d="M500.0,262.0 L540.0,262.0 L560.0,275.0 L600.0,275.0 L640.0,275.0" fill="none" stroke="#d5d1ca" stroke-width="0.55" stroke-linejoin="round" stroke-linecap="round" />
<path d="M520.0,282.0 L560.0,290.0 L600.0,300.0 L640.0,320.0" fill="none" stroke="#d5d1ca" stroke-width="0.55" stroke-linejoin="round" stroke-linecap="round" />
<path d="M600.0,230.0 L605.0,262.0 L600.0,300.0 L605.0,325.0" fill="none" stroke="#d5d1ca" stroke-width="0.55" stroke-linejoin="round" stroke-linecap="round" />
<path d="M640.0,220.0 L645.0,260.0 L660.0,300.0" fill="none" stroke="#d5d1ca" stroke-width="0.55" stroke-linejoin="round" stroke-linecap="round" />
<path d="M560.0,290.0 L565.0,325.0" fill="none" stroke="#d5d1ca" stroke-width="0.55" stroke-linejoin="round" stroke-linecap="round" />
<path d="M470.0,245.0 L490.0,250.0 L500.0,262.0" fill="none" stroke="#d5d1ca" stroke-width="0.55" stroke-linejoin="round" stroke-linecap="round" />
<path d="M480.0,300.0 L500.0,300.0 L520.0,282.0" fill="none" stroke="#d5d1ca" stroke-width="0.55" stroke-linejoin="round" stroke-linecap="round" />
<path d="M652.6,67.5 L652.6,106.4 L661.0,136.0 L665.0,200.0" fill="none" stroke="#d5d1ca" stroke-width="0.55" stroke-linejoin="round" stroke-linecap="round" />
<path d="M629.0,136.0 L628.0,180.0 L622.0,213.0" fill="none" stroke="#d5d1ca" stroke-width="0.55" stroke-linejoin="round" stroke-linecap="round" />
<path d="M575.0,160.0 L600.0,150.0 L640.0,150.0 L670.0,155.0" fill="none" stroke="#d5d1ca" stroke-width="0.55" stroke-linejoin="round" stroke-linecap="round" />
<path d="M430.0,68.0 L440.0,85.0" fill="none" stroke="#d5d1ca" stroke-width="0.55" stroke-linejoin="round" stroke-linecap="round" />
<path d="M505.0,68.0 L500.0,90.0" fill="none" stroke="#d5d1ca" stroke-width="0.55" stroke-linejoin="round" stroke-linecap="round" />
<path d="M538.0,140.0 L600.0,140.0" fill="none" stroke="#d5d1ca" stroke-width="0.55" stroke-linejoin="round" stroke-linecap="round" />
<path d="M231.6,152.0 L270.0,152.0" fill="none" stroke="#d5d1ca" stroke-width="0.55" stroke-linejoin="round" stroke-linecap="round" />
<path d="M231.6,167.0 L260.0,167.0" fill="none" stroke="#d5d1ca" stroke-width="0.55" stroke-linejoin="round" stroke-linecap="round" />
<path d="M450.0,180.0 L470.0,182.0 L476.0,200.0" fill="none" stroke="#d5d1ca" stroke-width="0.55" stroke-linejoin="round" stroke-linecap="round" />
<path d="M420.0,255.0 L420.0,325.0" fill="none" stroke="#d5d1ca" stroke-width="0.55" stroke-linejoin="round" stroke-linecap="round" />
<path d="M339.0,100.0 L370.0,100.0" fill="none" stroke="#d5d1ca" stroke-width="0.55" stroke-linejoin="round" stroke-linecap="round" />
<path d="M350.0,110.0 L350.0,118.0" fill="none" stroke="#d5d1ca" stroke-width="0.55" stroke-linejoin="round" stroke-linecap="round" />
<path d="M370.0,68.0 L370.0,115.0" fill="none" stroke="#d5d1ca" stroke-width="0.55" stroke-linejoin="round" stroke-linecap="round" />
<path d="M322.0,100.0 L322.0,68.0" fill="none" stroke="#d5d1ca" stroke-width="0.55" stroke-linejoin="round" stroke-linecap="round" />
<path d="M520.0,68.0 L530.0,90.0 L538.0,100.0" fill="none" stroke="#d5d1ca" stroke-width="0.55" stroke-linejoin="round" stroke-linecap="round" />
<path d="M520.0,114.8 L565.0,114.8" fill="none" stroke="#d5d1ca" stroke-width="0.55" stroke-linejoin="round" stroke-linecap="round" />
<path d="M546.9,150.0 L568.8,119.9 L585.0,100.0" fill="none" stroke="#d5d1ca" stroke-width="0.55" stroke-linejoin="round" stroke-linecap="round" />
<path d="M470.0,300.0 L480.0,325.0" fill="none" stroke="#d5d1ca" stroke-width="0.55" stroke-linejoin="round" stroke-linecap="round" />
<path d="M498.4,243.2 L530.6,251.3 L546.8,259.4 L572.6,257.7 L579.0,238.4 L598.4,235.2 L611.3,244.8 L614.5,264.2 L643.5,267.4 L670.0,262.0" fill="none" stroke="#d5d1ca" stroke-width="0.55" stroke-linejoin="round" stroke-linecap="round" />
<path d="M574.2,238.0 L575.8,319.0" fill="none" stroke="#d5d1ca" stroke-width="0.55" stroke-linejoin="round" stroke-linecap="round" />
<path d="M533.9,254.5 L530.6,283.5 L556.5,286.8" fill="none" stroke="#d5d1ca" stroke-width="0.55" stroke-linejoin="round" stroke-linecap="round" />
<path d="M498.0,264.2 L530.6,264.2 L579.0,277.0 L670.0,280.0" fill="none" stroke="#d5d1ca" stroke-width="0.55" stroke-linejoin="round" stroke-linecap="round" />
<path d="M482.0,277.0 L514.5,296.5 L540.0,310.0 L560.0,325.0" fill="none" stroke="#d5d1ca" stroke-width="0.55" stroke-linejoin="round" stroke-linecap="round" />
<path d="M560.0,220.0 L575.0,238.0" fill="none" stroke="#d5d1ca" stroke-width="0.55" stroke-linejoin="round" stroke-linecap="round" />
<path d="M600.0,213.0 L598.4,235.2" fill="none" stroke="#d5d1ca" stroke-width="0.55" stroke-linejoin="round" stroke-linecap="round" />
<path d="M640.0,213.0 L650.0,240.0 L643.5,267.4" fill="none" stroke="#d5d1ca" stroke-width="0.55" stroke-linejoin="round" stroke-linecap="round" />
<path d="M240.0,68.0 L240.0,95.0" fill="none" stroke="#d5d1ca" stroke-width="0.55" stroke-linejoin="round" stroke-linecap="round" />
<path d="M231.6,120.0 L260.0,120.0" fill="none" stroke="#d5d1ca" stroke-width="0.55" stroke-linejoin="round" stroke-linecap="round" />
<path d="M231.6,135.0 L262.0,135.0" fill="none" stroke="#d5d1ca" stroke-width="0.55" stroke-linejoin="round" stroke-linecap="round" />
<path d="M285.0,68.0 L285.0,100.0" fill="none" stroke="#d5d1ca" stroke-width="0.55" stroke-linejoin="round" stroke-linecap="round" />
<path d="M295.0,140.0 L322.0,140.0" fill="none" stroke="#d5d1ca" stroke-width="0.55" stroke-linejoin="round" stroke-linecap="round" />
<path d="M231.6,75.0 L322.0,75.0" fill="none" stroke="#d5d1ca" stroke-width="0.55" stroke-linejoin="round" stroke-linecap="round" />
<path d="M322.0,90.0 L370.0,90.0" fill="none" stroke="#d5d1ca" stroke-width="0.55" stroke-linejoin="round" stroke-linecap="round" />
<path d="M340.0,68.0 L340.0,128.0" fill="none" stroke="#d5d1ca" stroke-width="0.55" stroke-linejoin="round" stroke-linecap="round" />
<path d="M355.0,100.0 L355.0,130.0" fill="none" stroke="#d5d1ca" stroke-width="0.55" stroke-linejoin="round" stroke-linecap="round" />
<path d="M322.0,115.0 L345.0,115.0" fill="none" stroke="#d5d1ca" stroke-width="0.55" stroke-linejoin="round" stroke-linecap="round" />
<path d="M600.0,68.0 L600.0,95.0" fill="none" stroke="#d5d1ca" stroke-width="0.55" stroke-linejoin="round" stroke-linecap="round" />
<path d="M625.0,68.0 L628.0,95.0 L640.0,110.0" fill="none" stroke="#d5d1ca" stroke-width="0.55" stroke-linejoin="round" stroke-linecap="round" />
<path d="M565.0,140.0 L580.0,165.0 L600.0,175.0 L640.0,180.0 L670.0,175.0" fill="none" stroke="#d5d1ca" stroke-width="0.55" stroke-linejoin="round" stroke-linecap="round" />
<path d="M590.0,150.0 L600.0,175.0" fill="none" stroke="#d5d1ca" stroke-width="0.55" stroke-linejoin="round" stroke-linecap="round" />
<path d="M640.0,130.0 L650.0,150.0 L670.0,150.0" fill="none" stroke="#d5d1ca" stroke-width="0.55" stroke-linejoin="round" stroke-linecap="round" />
<path d="M322,67.5 L322,325" stroke="#c4b8c4" stroke-width="0.6" stroke-dasharray="2,1.2" fill="none"/>
<path d="M231.6,199.8 L322,199.8" stroke="#c4b8c4" stroke-width="0.6" stroke-dasharray="2,1.2" fill="none"/>
<path d="M290.6,282 L290.6,325" stroke="#c4b8c4" stroke-width="0.5" stroke-dasharray="2,1.2" fill="none"/>
<path d="M426,250 L426,325" stroke="#c4b8c4" stroke-width="0.6" stroke-dasharray="2,1.2" fill="none"/>
<path d="M534,213 L670,213" stroke="#c9b8cf" stroke-width="0.7" fill="none"/>
<path d="M519.0,140.0 L525.0,139.0 L536.6,131.6 L551.2,128.0 L563.0,121.4 L570.3,115.5 L582.0,111.1 L586.4,106.7 L584.5,103.5 L588.0,99.0 L600.0,95.0 L604.0,84.5 L612.0,77.0 L619.0,67.5" fill="none" stroke="#a9c98e" stroke-width="3.6" stroke-linejoin="round" stroke-linecap="round" />
<path d="M519.0,140.0 L525.0,139.0 L536.6,131.6 L551.2,128.0 L563.0,121.4 L570.3,115.5 L582.0,111.1 L586.4,106.7 L584.5,103.5 L588.0,99.0 L600.0,95.0 L604.0,84.5 L612.0,77.0 L619.0,67.5" fill="none" stroke="#9cc2cf" stroke-width="3.1" stroke-linejoin="round" stroke-linecap="round" />
<path d="M519.0,140.0 L525.0,139.0 L536.6,131.6 L551.2,128.0 L563.0,121.4 L570.3,115.5 L582.0,111.1 L586.4,106.7 L584.5,103.5 L588.0,99.0 L600.0,95.0 L604.0,84.5 L612.0,77.0 L619.0,67.5" fill="none" stroke="#b0d3df" stroke-width="2.6" stroke-linejoin="round" stroke-linecap="round" />
<path d="M229.0,308.4 L251.0,294.7 L271.0,288.1 L291.0,278.4 L317.0,270.5" fill="none" stroke="#9cc2cf" stroke-width="8.0" stroke-linejoin="round" stroke-linecap="round" />
<path d="M229.0,308.4 L251.0,294.7 L271.0,288.1 L291.0,278.4 L317.0,270.5" fill="none" stroke="#b0d3df" stroke-width="7.5" stroke-linejoin="round" stroke-linecap="round" />
<path d="M229.0,308.4 L251.0,294.7 L271.0,288.1 L291.0,278.4 L317.0,270.5" fill="none" stroke="#9cc3d2" stroke-width="0.4" stroke-linejoin="round" stroke-linecap="round" />
<path d="M317.0,266.8 L321.0,266.3 L325.0,259.8 L330.2,258.5 L343.2,259.2 L360.2,252.0 L375.0,243.0 L388.0,236.0 L400.0,236.5 L413.6,243.0 L428.0,240.0 L443.0,238.5 L443.0,243.0 L428.0,244.5 L413.6,247.5 L400.0,249.0 L385.0,256.0 L370.0,262.0 L361.0,267.6 L340.6,269.6 L317.0,274.2 Z" fill="#b0d3df" stroke="#9cc2cf" stroke-width="0.5" />
<path d="M326.0,262.0 L335.0,260.5 L345.0,261.0 L338.0,266.0 L328.0,267.0 Z" fill="#e3f0cf" stroke="#9fc48a" stroke-width="0.5" />
<path d="M362.0,258.0 L375.0,249.0 L388.0,242.0 L398.0,241.0 L392.0,247.0 L378.0,254.0 L366.0,261.0 Z" fill="#cfe3c8" stroke="#9fc48a" stroke-width="0.5" />
<path d="M395.0,240.5 L405.0,239.0 L415.0,244.5 L405.0,246.0 Z" fill="#dde8c8" stroke="#9fc48a" stroke-width="0.4" />
<path d="M441.0,240.0 L461.0,236.0 L475.0,237.0 L490.0,236.2 L502.0,231.5 L513.7,224.5 L524.0,217.5 L532.4,210.4 L538.0,203.0 L541.8,196.4 L544.0,191.0" fill="none" stroke="#9cc2cf" stroke-width="6.0" stroke-linejoin="round" stroke-linecap="round" />
<path d="M441.0,240.0 L461.0,236.0 L475.0,237.0 L490.0,236.2 L502.0,231.5 L513.7,224.5 L524.0,217.5 L532.4,210.4 L538.0,203.0 L541.8,196.4 L544.0,191.0" fill="none" stroke="#b0d3df" stroke-width="5.5" stroke-linejoin="round" stroke-linecap="round" />
<path d="M544.5,192.0 L544.0,184.0 L542.0,176.0" fill="none" stroke="#b7d4a6" stroke-width="11.0" stroke-linejoin="round" stroke-linecap="round" />
<path d="M544.5,192.0 L544.0,184.0 L542.0,176.0" fill="none" stroke="#9cc2cf" stroke-width="10.5" stroke-linejoin="round" stroke-linecap="round" />
<path d="M544.5,192.0 L544.0,184.0 L542.0,176.0" fill="none" stroke="#b0d3df" stroke-width="10" stroke-linejoin="round" stroke-linecap="round" />
<path d="M544.0,184.0 L542.0,176.0 L539.0,168.0 L533.0,157.0" fill="none" stroke="#b7d4a6" stroke-width="14.0" stroke-linejoin="round" stroke-linecap="round" />
<path d="M544.0,184.0 L542.0,176.0 L539.0,168.0 L533.0,157.0" fill="none" stroke="#9cc2cf" stroke-width="13.5" stroke-linejoin="round" stroke-linecap="round" />
<path d="M544.0,184.0 L542.0,176.0 L539.0,168.0 L533.0,157.0" fill="none" stroke="#b0d3df" stroke-width="13" stroke-linejoin="round" stroke-linecap="round" />
<path d="M533.0,157.0 L526.0,147.0 L519.0,140.0" fill="none" stroke="#b7d4a6" stroke-width="10.5" stroke-linejoin="round" stroke-linecap="round" />
<path d="M533.0,157.0 L526.0,147.0 L519.0,140.0" fill="none" stroke="#9cc2cf" stroke-width="10.0" stroke-linejoin="round" stroke-linecap="round" />
<path d="M533.0,157.0 L526.0,147.0 L519.0,140.0" fill="none" stroke="#b0d3df" stroke-width="9.5" stroke-linejoin="round" stroke-linecap="round" />
<path d="M534.0,160.0 L540.0,172.0 L543.0,185.0" fill="none" stroke="#b7d4a6" stroke-width="0.6" stroke-linejoin="round" stroke-linecap="round" />
<path d="M519.0,140.0 L510.0,138.0 L498.0,133.0 L488.0,126.0 L478.0,118.0" fill="none" stroke="#b7d4a6" stroke-width="5.5" stroke-linejoin="round" stroke-linecap="round" />
<path d="M519.0,140.0 L510.0,138.0 L498.0,133.0 L488.0,126.0 L478.0,118.0" fill="none" stroke="#9cc2cf" stroke-width="5.0" stroke-linejoin="round" stroke-linecap="round" />
<path d="M519.0,140.0 L510.0,138.0 L498.0,133.0 L488.0,126.0 L478.0,118.0" fill="none" stroke="#b0d3df" stroke-width="4.5" stroke-linejoin="round" stroke-linecap="round" />
<path d="M478.0,118.0 L470.0,108.0 L467.0,100.0 L466.0,67.5" fill="none" stroke="#b7d4a6" stroke-width="4.0" stroke-linejoin="round" stroke-linecap="round" />
<path d="M478.0,118.0 L470.0,108.0 L467.0,100.0 L466.0,67.5" fill="none" stroke="#9cc2cf" stroke-width="3.5" stroke-linejoin="round" stroke-linecap="round" />
<path d="M478.0,118.0 L470.0,108.0 L467.0,100.0 L466.0,67.5" fill="none" stroke="#b0d3df" stroke-width="3.0" stroke-linejoin="round" stroke-linecap="round" />
<path d="M290.0,132.0 L303.0,137.0 L320.0,146.0 L334.0,147.0" fill="none" stroke="#9cc8d8" stroke-width="0.9" stroke-linejoin="round" stroke-linecap="round" />
<path d="M345.0,140.0 L370.0,137.0 L390.0,124.0 L400.0,118.0 L420.0,117.0 L440.0,112.0 L455.0,112.0 L468.0,118.0" fill="none" stroke="#9cc8d8" stroke-width="0.9" stroke-linejoin="round" stroke-linecap="round" />
<path d="M414.7,114.0 L414.7,98.0 L426.0,82.0 L435.6,67.5" fill="none" stroke="#9cc8d8" stroke-width="0.9" stroke-linejoin="round" stroke-linecap="round" />
<path d="M629.0,130.0 L616.0,147.0 L612.0,169.0 L608.0,185.0 L607.0,200.0 L612.0,205.0" fill="none" stroke="#9cc8d8" stroke-width="0.9" stroke-linejoin="round" stroke-linecap="round" />
<path d="M629.0,136.0 L642.5,114.8 L670.0,112.3" fill="none" stroke="#9cc8d8" stroke-width="0.9" stroke-linejoin="round" stroke-linecap="round" />
<path d="M479.0,292.0 L485.0,300.0 L490.0,305.0 L500.0,318.0 L508.0,325.0" fill="none" stroke="#9cc8d8" stroke-width="0.9" stroke-linejoin="round" stroke-linecap="round" />
<path d="M286.6,284.0 L287.4,292.0 L281.0,308.0 L289.0,325.0" fill="none" stroke="#9cc8d8" stroke-width="0.9" stroke-linejoin="round" stroke-linecap="round" />
<path d="M565.0,192.0 L580.0,198.0 L595.0,196.0 L610.0,200.0 L640.0,196.0 L670.0,192.0" fill="none" stroke="#9cc8d8" stroke-width="0.9" stroke-linejoin="round" stroke-linecap="round" />
<path d="M231.6,94.0 L236.0,95.5 L240.7,97.4 L244.0,98.0 L247.1,99.8 L250.0,101.0 L253.5,104.6 L257.0,106.0 L261.6,110.3 L263.0,113.0 L265.6,117.5 L267.0,121.0 L269.6,125.6 L273.0,127.0 L277.7,128.8 L281.0,128.0 L285.8,129.6 L289.0,132.0 L292.2,133.6 L297.0,135.0 L303.5,137.2 L311.0,141.0 L319.6,146.1 L327.0,147.0 L334.0,146.9" fill="none" stroke="#9cb8a0" stroke-width="0.9" stroke-linejoin="round" stroke-linecap="round" />
<path d="M231.6,94.0 L236.0,95.5 L240.7,97.4 L244.0,98.0 L247.1,99.8 L250.0,101.0 L253.5,104.6 L257.0,106.0 L261.6,110.3 L263.0,113.0 L265.6,117.5 L267.0,121.0 L269.6,125.6 L273.0,127.0 L277.7,128.8 L281.0,128.0 L285.8,129.6 L289.0,132.0 L292.2,133.6 L297.0,135.0 L303.5,137.2 L311.0,141.0 L319.6,146.1 L327.0,147.0 L334.0,146.9" fill="none" stroke="#b8d4dc" stroke-width="0.3" stroke-linejoin="round" stroke-linecap="round" />
<rect x="248" y="80" width="2.2" height="1.8" fill="#d8e8c4"/>
<rect x="258" y="76" width="2.2" height="1.8" fill="#d8e8c4"/>
<rect x="270" y="90" width="2.2" height="1.8" fill="#d8e8c4"/>
<rect x="285" y="82" width="2.2" height="1.8" fill="#d8e8c4"/>
<rect x="300" y="92" width="2.2" height="1.8" fill="#d8e8c4"/>
<rect x="312" y="78" width="2.2" height="1.8" fill="#d8e8c4"/>
<rect x="262" y="104" width="2.2" height="1.8" fill="#d8e8c4"/>
<rect x="278" y="115" width="2.2" height="1.8" fill="#d8e8c4"/>
<rect x="295" y="118" width="2.2" height="1.8" fill="#d8e8c4"/>
<rect x="305" y="125" width="2.2" height="1.8" fill="#d8e8c4"/>
<rect x="245" y="120" width="2.2" height="1.8" fill="#d8e8c4"/>
<path d="M231.6,78.0 L244.0,91.8 L256.0,96.6 L269.6,99.8 L279.3,107.0 L295.4,107.5 L308.3,120.0 L321.2,125.6 L337.3,135.2 L349.0,140.0 L362.0,137.0 L370.0,131.0 L390.0,122.5 L405.0,121.0 L414.7,125.6 L429.2,123.2 L446.4,126.0 L467.3,121.6 L477.7,119.0 L486.4,122.5 L496.9,128.0 L510.0,133.0 L519.5,140.0" fill="none" stroke="#d68b96" stroke-width="1.25" stroke-linejoin="round" stroke-linecap="round" />
<path d="M441.0,132.0 L463.8,140.7 L481.2,145.1 L496.9,144.2 L519.5,153.0" fill="none" stroke="#d68b96" stroke-width="1.25" stroke-linejoin="round" stroke-linecap="round" />
<path d="M481.2,145.1 L483.0,158.2 L479.0,170.0 L476.0,181.5 L476.0,200.0 L475.0,208.0 L453.0,219.0 L445.0,230.0 L449.0,250.0 L445.0,259.0 L437.0,271.0 L436.0,284.0" fill="none" stroke="#d68b96" stroke-width="1.25" stroke-linejoin="round" stroke-linecap="round" />
<path d="M231.6,311.0 L251.0,299.6 L271.0,292.7 L291.0,282.7 L330.0,272.9 L361.0,269.6 L394.5,273.6 L408.0,278.3 L435.6,284.0 L449.0,287.2 L490.5,297.0 L551.7,322.6 L556.0,325.0" fill="none" stroke="#d68b96" stroke-width="1.25" stroke-linejoin="round" stroke-linecap="round" />
<path d="M514.6,130.0 L530.0,150.0 L546.8,167.0 L550.0,178.0 L553.0,194.5 L570.6,188.0 L580.0,188.0 L595.0,194.8 L632.0,193.0 L652.6,195.7 L670.0,190.6" fill="none" stroke="#d68b96" stroke-width="1.25" stroke-linejoin="round" stroke-linecap="round" />
<path d="M517.9,67.5 L508.2,90.2 L506.6,107.9 L505.0,125.0" fill="none" stroke="#d68b96" stroke-width="1.25" stroke-linejoin="round" stroke-linecap="round" />
<path d="M231.6,78.0 L244.0,91.8 L256.0,96.6 L269.6,99.8 L279.3,107.0 L295.4,107.5 L308.3,120.0 L321.2,125.6 L337.3,135.2 L349.0,140.0 L362.0,137.0 L370.0,131.0 L390.0,122.5 L405.0,121.0 L414.7,125.6 L429.2,123.2 L446.4,126.0 L467.3,121.6 L477.7,119.0 L486.4,122.5 L496.9,128.0 L510.0,133.0 L519.5,140.0" fill="none" stroke="#e9a3ad" stroke-width="0.75" stroke-linejoin="round" stroke-linecap="round" />
<path d="M441.0,132.0 L463.8,140.7 L481.2,145.1 L496.9,144.2 L519.5,153.0" fill="none" stroke="#e9a3ad" stroke-width="0.75" stroke-linejoin="round" stroke-linecap="round" />
<path d="M481.2,145.1 L483.0,158.2 L479.0,170.0 L476.0,181.5 L476.0,200.0 L475.0,208.0 L453.0,219.0 L445.0,230.0 L449.0,250.0 L445.0,259.0 L437.0,271.0 L436.0,284.0" fill="none" stroke="#e9a3ad" stroke-width="0.75" stroke-linejoin="round" stroke-linecap="round" />
<path d="M231.6,311.0 L251.0,299.6 L271.0,292.7 L291.0,282.7 L330.0,272.9 L361.0,269.6 L394.5,273.6 L408.0,278.3 L435.6,284.0 L449.0,287.2 L490.5,297.0 L551.7,322.6 L556.0,325.0" fill="none" stroke="#e9a3ad" stroke-width="0.75" stroke-linejoin="round" stroke-linecap="round" />
<path d="M514.6,130.0 L530.0,150.0 L546.8,167.0 L550.0,178.0 L553.0,194.5 L570.6,188.0 L580.0,188.0 L595.0,194.8 L632.0,193.0 L652.6,195.7 L670.0,190.6" fill="none" stroke="#e9a3ad" stroke-width="0.75" stroke-linejoin="round" stroke-linecap="round" />
<path d="M517.9,67.5 L508.2,90.2 L506.6,107.9 L505.0,125.0" fill="none" stroke="#e9a3ad" stroke-width="0.75" stroke-linejoin="round" stroke-linecap="round" />
<path d="M419.5,70.8 L427.6,80.5 L449.0,91.0 L462.0,96.0" fill="none" stroke="#e3b47e" stroke-width="1.0" stroke-linejoin="round" stroke-linecap="round" />
<path d="M520.0,140.0 L558.6,139.0 L576.0,123.5 L596.2,110.6 L634.1,110.6 L637.5,114.0 L670.0,110.1" fill="none" stroke="#e3b47e" stroke-width="1.0" stroke-linejoin="round" stroke-linecap="round" />
<path d="M231.6,303.2 L251.0,290.8 L271.0,284.2 L291.0,274.0 L321.0,265.8 L325.0,259.0 L330.2,257.8 L343.2,258.5 L355.0,253.0 L369.6,245.0 L388.7,234.8 L403.3,233.3 L431.1,228.9 L442.8,227.4 L465.0,222.0" fill="none" stroke="#e3b47e" stroke-width="1.0" stroke-linejoin="round" stroke-linecap="round" />
<path d="M379.9,272.0 L398.9,253.0 L416.5,248.0 L439.9,243.6" fill="none" stroke="#e3b47e" stroke-width="1.0" stroke-linejoin="round" stroke-linecap="round" />
<path d="M600.5,320.7 L634.1,297.1 L647.6,281.1 L654.3,280.3 L670.0,270.2" fill="none" stroke="#e3b47e" stroke-width="1.0" stroke-linejoin="round" stroke-linecap="round" />
<path d="M440.0,258.0 L470.0,248.0 L481.0,255.0 L481.0,292.0" fill="none" stroke="#e3b47e" stroke-width="1.0" stroke-linejoin="round" stroke-linecap="round" />
<path d="M419.5,70.8 L427.6,80.5 L449.0,91.0 L462.0,96.0" fill="none" stroke="#f7d39c" stroke-width="0.6" stroke-linejoin="round" stroke-linecap="round" />
<path d="M520.0,140.0 L558.6,139.0 L576.0,123.5 L596.2,110.6 L634.1,110.6 L637.5,114.0 L670.0,110.1" fill="none" stroke="#f7d39c" stroke-width="0.6" stroke-linejoin="round" stroke-linecap="round" />
<path d="M231.6,303.2 L251.0,290.8 L271.0,284.2 L291.0,274.0 L321.0,265.8 L325.0,259.0 L330.2,257.8 L343.2,258.5 L355.0,253.0 L369.6,245.0 L388.7,234.8 L403.3,233.3 L431.1,228.9 L442.8,227.4 L465.0,222.0" fill="none" stroke="#f7d39c" stroke-width="0.6" stroke-linejoin="round" stroke-linecap="round" />
<path d="M379.9,272.0 L398.9,253.0 L416.5,248.0 L439.9,243.6" fill="none" stroke="#f7d39c" stroke-width="0.6" stroke-linejoin="round" stroke-linecap="round" />
<path d="M600.5,320.7 L634.1,297.1 L647.6,281.1 L654.3,280.3 L670.0,270.2" fill="none" stroke="#f7d39c" stroke-width="0.6" stroke-linejoin="round" stroke-linecap="round" />
<path d="M440.0,258.0 L470.0,248.0 L481.0,255.0 L481.0,292.0" fill="none" stroke="#f7d39c" stroke-width="0.6" stroke-linejoin="round" stroke-linecap="round" />
<path d="M231.6,100.6 L276.0,136.0 L289.0,140.5 L321.2,149.3 L341.0,147.7" fill="none" stroke="#c4b394" stroke-width="0.9" stroke-linejoin="round" stroke-linecap="round" />
<path d="M289.0,140.5 L263.2,173.5 L252.0,178.3 L247.0,183.0 L240.7,187.2 L231.6,188.0" fill="none" stroke="#c4b394" stroke-width="0.7" stroke-linejoin="round" stroke-linecap="round" />
<path d="M615.6,325.0 L615.6,318.0 L620.0,318.0 L620.0,312.0 L626.0,312.0 L626.0,305.0 L632.0,305.0 L632.0,298.0 L638.0,298.0 L638.0,291.0 L645.9,291.0 L645.9,286.1 L665.3,286.1 L665.3,296.2 L670.0,296.2" fill="none" stroke="#b8a68a" stroke-width="0.6" stroke-linejoin="round" stroke-linecap="round" />
<text x="234" y="93" font-size="3.0" fill="#5a5a5a" stroke="#f6f4ef" stroke-width="0.6" paint-order="stroke" >Granger</text>
<text x="280" y="103" font-size="3.0" fill="#5a5a5a" stroke="#f6f4ef" stroke-width="0.6" paint-order="stroke" >Sunnyside</text>
<text x="268" y="128.5" font-size="3.0" fill="#5a5a5a" stroke="#f6f4ef" stroke-width="0.6" paint-order="stroke" >Grandview</text>
<text x="404" y="124.5" font-size="3.0" fill="#5a5a5a" stroke="#f6f4ef" stroke-width="0.6" paint-order="stroke" >Benton City</text>
<text x="328" y="145" font-size="2.6" fill="#5a5a5a" stroke="#f6f4ef" stroke-width="0.6" paint-order="stroke" >Prosser</text>
<text x="450" y="270" font-size="3.0" fill="#5a5a5a" stroke="#f6f4ef" stroke-width="0.6" paint-order="stroke" >Hermiston</text>
<text x="503" y="139" font-size="2.8" fill="#5a5a5a" stroke="#f6f4ef" stroke-width="0.6" paint-order="stroke" >Pasco</text>
<text x="279" y="279" font-size="2.8" fill="#6b95c8" stroke="#f6f4ef" stroke-width="0.6" paint-order="stroke" >Lake Umatilla</text>
<text x="537" y="181" font-size="2.6" fill="#6b95c8" stroke="#f6f4ef" stroke-width="0.6" paint-order="stroke" >Lake Wallula</text>
<text x="356" y="310" font-size="3.1" fill="#9b4d4d" stroke="#f6f4ef" stroke-width="0.6" paint-order="stroke" font-style="italic">Boardman</text>
<text x="357" y="314.5" font-size="3.1" fill="#9b4d4d" stroke="#f6f4ef" stroke-width="0.6" paint-order="stroke" font-style="italic">Bombing</text>
<text x="358.5" y="319" font-size="3.1" fill="#9b4d4d" stroke="#f6f4ef" stroke-width="0.6" paint-order="stroke" font-style="italic">Range</text>
<text x="382.5" y="246.0" font-size="2.4" fill="#5c8a50" stroke="#f6f4ef" stroke-width="0.6" paint-order="stroke" >Umatilla</text>
<text x="382.5" y="249.6" font-size="2.4" fill="#5c8a50" stroke="#f6f4ef" stroke-width="0.6" paint-order="stroke" >National</text>
<text x="382.5" y="253.2" font-size="2.4" fill="#5c8a50" stroke="#f6f4ef" stroke-width="0.6" paint-order="stroke" >Wildlife</text>
<text x="382.5" y="256.8" font-size="2.4" fill="#5c8a50" stroke="#f6f4ef" stroke-width="0.6" paint-order="stroke" >Refuge</text>
<text x="553" y="187.0" font-size="2.3" fill="#5c8a50" stroke="#f6f4ef" stroke-width="0.6" paint-order="stroke" >McNary</text>
<text x="553" y="190.5" font-size="2.3" fill="#5c8a50" stroke="#f6f4ef" stroke-width="0.6" paint-order="stroke" >National</text>
<text x="553" y="194.0" font-size="2.3" fill="#5c8a50" stroke="#f6f4ef" stroke-width="0.6" paint-order="stroke" >Wildlife</text>
<text x="553" y="197.5" font-size="2.3" fill="#5c8a50" stroke="#f6f4ef" stroke-width="0.6" paint-order="stroke" >Refuge</text>
<text x="546" y="73.0" font-size="2.3" fill="#5c8a50" stroke="#f6f4ef" stroke-width="0.6" paint-order="stroke" >Juniper</text>
<text x="546" y="76.6" font-size="2.3" fill="#5c8a50" stroke="#f6f4ef" stroke-width="0.6" paint-order="stroke" >Dunes</text>
<text x="546" y="80.2" font-size="2.3" fill="#5c8a50" stroke="#f6f4ef" stroke-width="0.6" paint-order="stroke" >Wilderness</text>
<text x="546" y="83.8" font-size="2.3" fill="#5c8a50" stroke="#f6f4ef" stroke-width="0.6" paint-order="stroke" >Area</text>
<rect x="364.8" y="129.6" width="12.0" height="6.400000000000006" rx="0.8" fill="#f3dede" stroke="#d4a4a8" stroke-width="0.5"/>
<text x="370.8" y="132.1" font-size="2.9" fill="#6a4a4a" text-anchor="middle">I 82</text>
<text x="370.8" y="135.3" font-size="2.9" fill="#6a4a4a" text-anchor="middle">US 12</text>
<rect x="473.6" y="159.8" width="14.899999999999977" height="9.699999999999989" rx="0.8" fill="#f3dede" stroke="#d4a4a8" stroke-width="0.5"/>
<text x="481.05" y="163.12500000000003" font-size="2.9" fill="#6a4a4a" text-anchor="middle">I 82</text>
<text x="481.05" y="167.975" font-size="2.9" fill="#6a4a4a" text-anchor="middle">US 395</text>
<rect x="396.2" y="271.9" width="12.800000000000011" height="8.900000000000034" rx="0.8" fill="#f3dede" stroke="#d4a4a8" stroke-width="0.5"/>
<text x="402.6" y="275.025" font-size="2.9" fill="#6a4a4a" text-anchor="middle">I 84</text>
<text x="402.6" y="279.47499999999997" font-size="2.9" fill="#6a4a4a" text-anchor="middle">US 30</text>
<rect x="490.2" y="292.8" width="14.400000000000034" height="13.399999999999977" rx="0.8" fill="#f3dede" stroke="#d4a4a8" stroke-width="0.5"/>
<text x="497.4" y="295.93333333333334" font-size="2.9" fill="#6a4a4a" text-anchor="middle">I 84</text>
<text x="497.4" y="300.4" font-size="2.9" fill="#6a4a4a" text-anchor="middle">US 30</text>
<text x="497.4" y="304.8666666666666" font-size="2.9" fill="#6a4a4a" text-anchor="middle">US 395</text>
<rect x="640" y="193" width="12.600000000000023" height="7" rx="0.8" fill="#f3dede" stroke="#d4a4a8" stroke-width="0.5"/>
<text x="646.3" y="197.4" font-size="2.9" fill="#6a4a4a" text-anchor="middle">US 12</text>
<rect x="438" y="132" width="5" height="5" rx="0.8" fill="#f3dede" stroke="#d4a4a8" stroke-width="0.5"/>
<text x="440.5" y="135.4" font-size="2.9" fill="#6a4a4a" text-anchor="middle">I</text>
<g filter="url(#blur)"><path d="M425.8,119.0 L428.8,118.0 L434.3,112.0 L432.3,109.5 L428.3,111.0 Z" fill="#000" opacity="0.7"/><path d="M435.4,114.60000000000001 L438.4,113.60000000000001 L443.9,107.60000000000001 L441.9,105.10000000000001 L437.9,106.60000000000001 Z" fill="#000" opacity="0.7"/><path d="M441.0,116.7 L444.0,115.7 L449.5,109.7 L447.5,107.2 L443.5,108.7 Z" fill="#000" opacity="0.7"/><path d="M448.1,104.2 L451.1,103.2 L456.6,97.2 L454.6,94.7 L450.6,96.2 Z" fill="#000" opacity="0.7"/><path d="M458.1,110.3 L461.1,109.3 L466.6,103.3 L464.6,100.8 L460.6,102.3 Z" fill="#000" opacity="0.7"/><path d="M457.7,124.2 L460.7,123.2 L466.2,117.2 L464.2,114.7 L460.2,116.2 Z" fill="#000" opacity="0.7"/><path d="M446.2,136.4 L449.2,135.4 L454.7,129.4 L452.7,126.9 L448.7,128.4 Z" fill="#000" opacity="0.7"/><path d="M453.2,143.39999999999998 L456.2,142.39999999999998 L461.7,136.39999999999998 L459.7,133.89999999999998 L455.7,135.39999999999998 Z" fill="#000" opacity="0.7"/><path d="M461.9,144.6 L464.9,143.6 L470.4,137.6 L468.4,135.1 L464.4,136.6 Z" fill="#000" opacity="0.7"/><path d="M466.8,143.89999999999998 L469.8,142.89999999999998 L475.3,136.89999999999998 L473.3,134.39999999999998 L469.3,135.89999999999998 Z" fill="#000" opacity="0.7"/><path d="M471.6,120.7 L474.6,119.7 L480.1,113.7 L478.1,111.2 L474.1,112.7 Z" fill="#000" opacity="0.7"/><path d="M473.7,116.3 L476.7,115.3 L482.2,109.3 L480.2,106.8 L476.2,108.3 Z" fill="#000" opacity="0.7"/><path d="M479.8,113.7 L482.8,112.7 L488.3,106.7 L486.3,104.2 L482.3,105.7 Z" fill="#000" opacity="0.7"/><path d="M503.7,109.4 L506.7,108.4 L512.2,102.4 L510.2,99.9 L506.2,101.4 Z" fill="#000" opacity="0.7"/><path d="M498.5,130.29999999999998 L501.5,129.29999999999998 L507,123.29999999999998 L505,120.79999999999998 L501,122.29999999999998 Z" fill="#000" opacity="0.7"/><path d="M499.3,134.7 L502.3,133.7 L507.8,127.69999999999999 L505.8,125.19999999999999 L501.8,126.69999999999999 Z" fill="#000" opacity="0.7"/><path d="M506.0,125.9 L509.0,124.9 L514.5,118.9 L512.5,116.4 L508.5,117.9 Z" fill="#000" opacity="0.7"/><path d="M512.4,127.3 L515.4,126.3 L520.9,120.3 L518.9,117.8 L514.9,119.3 Z" fill="#000" opacity="0.7"/><path d="M489.8,139.89999999999998 L492.8,138.89999999999998 L498.3,132.89999999999998 L496.3,130.39999999999998 L492.3,131.89999999999998 Z" fill="#000" opacity="0.7"/><path d="M490.6,148.6 L493.6,147.6 L499.1,141.6 L497.1,139.1 L493.1,140.6 Z" fill="#000" opacity="0.7"/><path d="M509.5,153.79999999999998 L512.5,152.79999999999998 L518,146.79999999999998 L516,144.29999999999998 L512,145.79999999999998 Z" fill="#000" opacity="0.7"/><path d="M498.1,159.0 L501.1,158.0 L506.6,152.0 L504.6,149.5 L500.6,151.0 Z" fill="#000" opacity="0.7"/><path d="M499.0,160.79999999999998 L502.0,159.79999999999998 L507.5,153.79999999999998 L505.5,151.29999999999998 L501.5,152.79999999999998 Z" fill="#000" opacity="0.7"/><path d="M336.0,148.7 L339.0,147.7 L344.5,141.7 L342.5,139.2 L338.5,140.7 Z" fill="#000" opacity="0.7"/><path d="M567.1,116.7 L570.1,115.7 L575.6,109.7 L573.6,107.2 L569.6,108.7 Z" fill="#000" opacity="0.7"/><path d="M449.5,232.29999999999998 L452.5,231.29999999999998 L458,225.29999999999998 L456,222.79999999999998 L452,224.29999999999998 Z" fill="#000" opacity="0.7"/><path d="M444.3,241.2 L447.3,240.2 L452.8,234.2 L450.8,231.7 L446.8,233.2 Z" fill="#000" opacity="0.7"/><path d="M446.7,240.39999999999998 L449.7,239.39999999999998 L455.2,233.39999999999998 L453.2,230.89999999999998 L449.2,232.39999999999998 Z" fill="#000" opacity="0.7"/><path d="M445.9,249.2 L448.9,248.2 L454.4,242.2 L452.4,239.7 L448.4,241.2 Z" fill="#000" opacity="0.7"/><path d="M456.4,243.6 L459.4,242.6 L464.9,236.6 L462.9,234.1 L458.9,235.6 Z" fill="#000" opacity="0.7"/><path d="M463.9,280.3 L466.9,279.3 L472.4,273.3 L470.4,270.8 L466.4,272.3 Z" fill="#000" opacity="0.7"/><path d="M475.5,286.7 L478.5,285.7 L484,279.7 L482,277.2 L478,278.7 Z" fill="#000" opacity="0.7"/></g>
<path d="M426.3,119.0 C425.5,116.4 422.3,112.5 422.3,110.3 A4.0,4.0 0 1 1 430.3,110.3 C430.3,112.5 427.1,116.4 426.3,119.0 Z" fill="#3580cc" stroke="#2a67a5" stroke-width="0.4"/>
<circle cx="426.3" cy="110.3" r="1.4" fill="#fff"/>
<path d="M435.9,114.60000000000001 C435.09999999999997,112.00000000000001 431.9,108.10000000000001 431.9,105.9 A4.0,4.0 0 1 1 439.9,105.9 C439.9,108.10000000000001 436.7,112.00000000000001 435.9,114.60000000000001 Z" fill="#3580cc" stroke="#2a67a5" stroke-width="0.4"/>
<circle cx="435.9" cy="105.9" r="1.4" fill="#fff"/>
<path d="M441.5,116.7 C440.7,114.10000000000001 437.5,110.2 437.5,108 A4.0,4.0 0 1 1 445.5,108 C445.5,110.2 442.3,114.10000000000001 441.5,116.7 Z" fill="#3580cc" stroke="#2a67a5" stroke-width="0.4"/>
<circle cx="441.5" cy="108" r="1.4" fill="#fff"/>
<path d="M448.6,104.2 C447.8,101.60000000000001 444.6,97.7 444.6,95.5 A4.0,4.0 0 1 1 452.6,95.5 C452.6,97.7 449.40000000000003,101.60000000000001 448.6,104.2 Z" fill="#3580cc" stroke="#2a67a5" stroke-width="0.4"/>
<circle cx="448.6" cy="95.5" r="1.4" fill="#fff"/>
<path d="M458.6,110.3 C457.8,107.7 454.6,103.8 454.6,101.6 A4.0,4.0 0 1 1 462.6,101.6 C462.6,103.8 459.40000000000003,107.7 458.6,110.3 Z" fill="#3580cc" stroke="#2a67a5" stroke-width="0.4"/>
<circle cx="458.6" cy="101.6" r="1.4" fill="#fff"/>
<path d="M458.2,124.2 C457.4,121.60000000000001 454.2,117.7 454.2,115.5 A4.0,4.0 0 1 1 462.2,115.5 C462.2,117.7 459.0,121.60000000000001 458.2,124.2 Z" fill="#3580cc" stroke="#2a67a5" stroke-width="0.4"/>
<circle cx="458.2" cy="115.5" r="1.4" fill="#fff"/>
<path d="M446.7,136.4 C445.9,133.8 442.7,129.9 442.7,127.7 A4.0,4.0 0 1 1 450.7,127.7 C450.7,129.9 447.5,133.8 446.7,136.4 Z" fill="#3580cc" stroke="#2a67a5" stroke-width="0.4"/>
<circle cx="446.7" cy="127.7" r="1.4" fill="#fff"/>
<path d="M453.7,143.39999999999998 C452.9,140.79999999999998 449.7,136.89999999999998 449.7,134.7 A4.0,4.0 0 1 1 457.7,134.7 C457.7,136.89999999999998 454.5,140.79999999999998 453.7,143.39999999999998 Z" fill="#3580cc" stroke="#2a67a5" stroke-width="0.4"/>
<circle cx="453.7" cy="134.7" r="1.4" fill="#fff"/>
<path d="M462.4,144.6 C461.59999999999997,142.0 458.4,138.1 458.4,135.9 A4.0,4.0 0 1 1 466.4,135.9 C466.4,138.1 463.2,142.0 462.4,144.6 Z" fill="#3580cc" stroke="#2a67a5" stroke-width="0.4"/>
<circle cx="462.4" cy="135.9" r="1.4" fill="#fff"/>
<path d="M467.3,143.89999999999998 C466.5,141.29999999999998 463.3,137.39999999999998 463.3,135.2 A4.0,4.0 0 1 1 471.3,135.2 C471.3,137.39999999999998 468.1,141.29999999999998 467.3,143.89999999999998 Z" fill="#3580cc" stroke="#2a67a5" stroke-width="0.4"/>
<circle cx="467.3" cy="135.2" r="1.4" fill="#fff"/>
<path d="M472.1,120.7 C471.3,118.10000000000001 468.1,114.2 468.1,112 A4.0,4.0 0 1 1 476.1,112 C476.1,114.2 472.90000000000003,118.10000000000001 472.1,120.7 Z" fill="#3580cc" stroke="#2a67a5" stroke-width="0.4"/>
<circle cx="472.1" cy="112" r="1.4" fill="#fff"/>
<path d="M474.2,116.3 C473.4,113.7 470.2,109.8 470.2,107.6 A4.0,4.0 0 1 1 478.2,107.6 C478.2,109.8 475.0,113.7 474.2,116.3 Z" fill="#3580cc" stroke="#2a67a5" stroke-width="0.4"/>
<circle cx="474.2" cy="107.6" r="1.4" fill="#fff"/>
<path d="M480.3,113.7 C479.5,111.10000000000001 476.3,107.2 476.3,105 A4.0,4.0 0 1 1 484.3,105 C484.3,107.2 481.1,111.10000000000001 480.3,113.7 Z" fill="#3580cc" stroke="#2a67a5" stroke-width="0.4"/>
<circle cx="480.3" cy="105" r="1.4" fill="#fff"/>
<path d="M504.2,109.4 C503.4,106.80000000000001 500.2,102.9 500.2,100.7 A4.0,4.0 0 1 1 508.2,100.7 C508.2,102.9 505.0,106.80000000000001 504.2,109.4 Z" fill="#3580cc" stroke="#2a67a5" stroke-width="0.4"/>
<circle cx="504.2" cy="100.7" r="1.4" fill="#fff"/>
<path d="M499,130.29999999999998 C498.2,127.69999999999999 495.0,123.8 495.0,121.6 A4.0,4.0 0 1 1 503.0,121.6 C503.0,123.8 499.8,127.69999999999999 499,130.29999999999998 Z" fill="#3580cc" stroke="#2a67a5" stroke-width="0.4"/>
<circle cx="499" cy="121.6" r="1.4" fill="#fff"/>
<path d="M499.8,134.7 C499.0,132.1 495.8,128.2 495.8,126 A4.0,4.0 0 1 1 503.8,126 C503.8,128.2 500.6,132.1 499.8,134.7 Z" fill="#3580cc" stroke="#2a67a5" stroke-width="0.4"/>
<circle cx="499.8" cy="126" r="1.4" fill="#fff"/>
<path d="M506.5,125.9 C505.7,123.30000000000001 502.5,119.4 502.5,117.2 A4.0,4.0 0 1 1 510.5,117.2 C510.5,119.4 507.3,123.30000000000001 506.5,125.9 Z" fill="#3580cc" stroke="#2a67a5" stroke-width="0.4"/>
<circle cx="506.5" cy="117.2" r="1.4" fill="#fff"/>
<path d="M512.9,127.3 C512.1,124.7 508.9,120.8 508.9,118.6 A4.0,4.0 0 1 1 516.9,118.6 C516.9,120.8 513.6999999999999,124.7 512.9,127.3 Z" fill="#3580cc" stroke="#2a67a5" stroke-width="0.4"/>
<circle cx="512.9" cy="118.6" r="1.4" fill="#fff"/>
<path d="M490.3,139.89999999999998 C489.5,137.29999999999998 486.3,133.39999999999998 486.3,131.2 A4.0,4.0 0 1 1 494.3,131.2 C494.3,133.39999999999998 491.1,137.29999999999998 490.3,139.89999999999998 Z" fill="#3580cc" stroke="#2a67a5" stroke-width="0.4"/>
<circle cx="490.3" cy="131.2" r="1.4" fill="#fff"/>
<path d="M491.1,148.6 C490.3,146.0 487.1,142.1 487.1,139.9 A4.0,4.0 0 1 1 495.1,139.9 C495.1,142.1 491.90000000000003,146.0 491.1,148.6 Z" fill="#3580cc" stroke="#2a67a5" stroke-width="0.4"/>
<circle cx="491.1" cy="139.9" r="1.4" fill="#fff"/>
<path d="M510,153.79999999999998 C509.2,151.2 506.0,147.29999999999998 506.0,145.1 A4.0,4.0 0 1 1 514.0,145.1 C514.0,147.29999999999998 510.8,151.2 510,153.79999999999998 Z" fill="#3580cc" stroke="#2a67a5" stroke-width="0.4"/>
<circle cx="510" cy="145.1" r="1.4" fill="#fff"/>
<path d="M498.6,159.0 C497.8,156.4 494.6,152.5 494.6,150.3 A4.0,4.0 0 1 1 502.6,150.3 C502.6,152.5 499.40000000000003,156.4 498.6,159.0 Z" fill="#3580cc" stroke="#2a67a5" stroke-width="0.4"/>
<circle cx="498.6" cy="150.3" r="1.4" fill="#fff"/>
<path d="M499.5,160.79999999999998 C498.7,158.2 495.5,154.29999999999998 495.5,152.1 A4.0,4.0 0 1 1 503.5,152.1 C503.5,154.29999999999998 500.3,158.2 499.5,160.79999999999998 Z" fill="#3580cc" stroke="#2a67a5" stroke-width="0.4"/>
<circle cx="499.5" cy="152.1" r="1.4" fill="#fff"/>
<path d="M336.5,148.7 C335.7,146.1 332.5,142.2 332.5,140 A4.0,4.0 0 1 1 340.5,140 C340.5,142.2 337.3,146.1 336.5,148.7 Z" fill="#3580cc" stroke="#2a67a5" stroke-width="0.4"/>
<circle cx="336.5" cy="140" r="1.4" fill="#fff"/>
<path d="M567.6,116.7 C566.8000000000001,114.10000000000001 563.6,110.2 563.6,108 A4.0,4.0 0 1 1 571.6,108 C571.6,110.2 568.4,114.10000000000001 567.6,116.7 Z" fill="#3580cc" stroke="#2a67a5" stroke-width="0.4"/>
<circle cx="567.6" cy="108" r="1.4" fill="#fff"/>
<path d="M450,232.29999999999998 C449.2,229.7 446.0,225.79999999999998 446.0,223.6 A4.0,4.0 0 1 1 454.0,223.6 C454.0,225.79999999999998 450.8,229.7 450,232.29999999999998 Z" fill="#3580cc" stroke="#2a67a5" stroke-width="0.4"/>
<circle cx="450" cy="223.6" r="1.4" fill="#fff"/>
<path d="M444.8,241.2 C444.0,238.6 440.8,234.7 440.8,232.5 A4.0,4.0 0 1 1 448.8,232.5 C448.8,234.7 445.6,238.6 444.8,241.2 Z" fill="#3580cc" stroke="#2a67a5" stroke-width="0.4"/>
<circle cx="444.8" cy="232.5" r="1.4" fill="#fff"/>
<path d="M447.2,240.39999999999998 C446.4,237.79999999999998 443.2,233.89999999999998 443.2,231.7 A4.0,4.0 0 1 1 451.2,231.7 C451.2,233.89999999999998 448.0,237.79999999999998 447.2,240.39999999999998 Z" fill="#3580cc" stroke="#2a67a5" stroke-width="0.4"/>
<circle cx="447.2" cy="231.7" r="1.4" fill="#fff"/>
<path d="M446.4,249.2 C445.59999999999997,246.6 442.4,242.7 442.4,240.5 A4.0,4.0 0 1 1 450.4,240.5 C450.4,242.7 447.2,246.6 446.4,249.2 Z" fill="#3580cc" stroke="#2a67a5" stroke-width="0.4"/>
<circle cx="446.4" cy="240.5" r="1.4" fill="#fff"/>
<path d="M456.9,243.6 C456.09999999999997,241.0 452.9,237.1 452.9,234.9 A4.0,4.0 0 1 1 460.9,234.9 C460.9,237.1 457.7,241.0 456.9,243.6 Z" fill="#3580cc" stroke="#2a67a5" stroke-width="0.4"/>
<circle cx="456.9" cy="234.9" r="1.4" fill="#fff"/>
<path d="M464.4,280.3 C463.59999999999997,277.7 460.4,273.8 460.4,271.6 A4.0,4.0 0 1 1 468.4,271.6 C468.4,273.8 465.2,277.7 464.4,280.3 Z" fill="#3580cc" stroke="#2a67a5" stroke-width="0.4"/>
<circle cx="464.4" cy="271.6" r="1.4" fill="#fff"/>
<path d="M476,286.7 C475.2,284.09999999999997 472.0,280.2 472.0,278 A4.0,4.0 0 1 1 480.0,278 C480.0,280.2 476.8,284.09999999999997 476,286.7 Z" fill="#3580cc" stroke="#2a67a5" stroke-width="0.4"/>
<circle cx="476" cy="278" r="1.4" fill="#fff"/></svg>
<div class="a" style="left:3.6px;top:3.0px;width:10.8px;height:20.0px;background:#fff;border:0.8px solid #c6c6c6;border-radius:1.4px"></div><div class="a" style="left:4.4px;top:13.2px;width:9.2px;height:0.4px;background:#e4e4e4"></div><svg class="a" style="left:6.6px;top:6.6px" width="4.6" height="4.6" viewBox="0 0 10 10"><path d="M5,0.5 L5,9.5 M0.5,5 L9.5,5" stroke="#1a1a1a" stroke-width="2.1"/></svg><svg class="a" style="left:6.6px;top:16.3px" width="4.6" height="4.6" viewBox="0 0 10 10"><path d="M0.8,5 L9.2,5" stroke="#1a1a1a" stroke-width="2.1"/></svg><div class="a" style="left:361px;top:251.5px;width:77px;height:6px;background:rgba(255,255,255,0.8)"></div><div class="a" style="left:361.6px;top:253.3px;font-size:3.95px;color:#333;transform:scaleX(0.99);transform-origin:left center"><span style="display:inline-block;width:4px;height:2.6px;background:linear-gradient(#2e62c4 50%,#f5d000 50%);margin-right:1.2px;vertical-align:-0.2px"></span><span style="color:#2a6fbd">Leaflet</span> | © <span style="color:#2a6fbd">OpenStreetMap</span> contributors</div></div>
<div class="a" style="left:7.90px;top:346.00px;font-size:3.9px;font-weight:normal;color:#a88686;transform-origin:left center;transform:scaleX(0.937);">JOB</div>
<div class="a" style="left:17.60px;top:341.40px;width:36.50px;height:10.60px;border:0.8px solid #5a1c1c;border-radius:2.5px;background:#200505"></div>
<div class="a" style="left:22.00px;top:346.11px;font-size:4.9px;font-weight:normal;color:#f2eaea;transform-origin:left center;transform:scaleX(0.970);">All jobs</div>
<svg class="a" style="left:49.2px;top:345.0px" width="4.4" height="4.4" viewBox="0 0 10 10"><path d="M1.5,3 L5,7 L8.5,3" fill="none" stroke="#f0f0f0" stroke-width="1.8"/></svg>
<div class="a" style="left:258.40px;top:344.50px;width:4.60px;height:4.60px;background:#e31b23;border-radius:0.8px"></div>
<svg class="a" style="left:258.4px;top:344.5px" width="4.6" height="4.6" viewBox="0 0 10 10"><path d="M2.2,5.2 L4.2,7.2 L8,2.8" fill="none" stroke="#fff" stroke-width="1.5"/></svg>
<div class="a" style="left:265.00px;top:345.19px;font-size:5.4px;font-weight:normal;color:#f0e6e6;transform-origin:left center;transform:scaleX(0.954);">Civil Vehicles</div>
<div class="a" style="left:314.20px;top:344.50px;width:4.60px;height:4.60px;background:#e31b23;border-radius:0.8px"></div>
<svg class="a" style="left:314.2px;top:344.5px" width="4.6" height="4.6" viewBox="0 0 10 10"><path d="M2.2,5.2 L4.2,7.2 L8,2.8" fill="none" stroke="#fff" stroke-width="1.5"/></svg>
<div class="a" style="left:321.00px;top:345.19px;font-size:5.4px;font-weight:normal;color:#f0e6e6;transform-origin:left center;transform:scaleX(0.957);">Pipeline Vehicles</div>
<div class="a" style="left:564.00px;top:342.30px;width:105.80px;height:9.40px;border:0.8px solid #4c1818;border-radius:2.5px;background:#260707"></div>
<div class="a" style="left:568.20px;top:346.11px;font-size:4.8px;font-weight:normal;color:#a88888;transform-origin:left center;transform:scaleX(0.925);">Search vehicles or jobs...</div>
<div class="a" style="left:8.60px;top:355.60px;width:661.00px;height:101.00px;border:0.7px solid #340b0b;border-bottom:none;border-radius:3px 3px 0 0"></div>
<div class="a" style="left:8.80px;top:355.80px;width:660.60px;height:12.40px;background:#340808;border-radius:2.6px 2.6px 0 0"></div>
<div class="a" style="left:8.80px;top:367.60px;width:660.60px;height:0.70px;background:#420e0e"></div>
<div class="a" style="left:13.90px;top:361.14px;font-size:4.5px;font-weight:bold;color:#f4eaea;transform-origin:left center;transform:scaleX(0.980);">Vehicle</div>
<svg class="a" style="left:30.6px;top:359.8px" width="4" height="4" viewBox="0 0 10 10"><path d="M5,0.5 L9.8,9.5 L0.2,9.5 Z" fill="#f4eaea"/></svg>
<div class="a" style="left:184.20px;top:360.70px;font-size:4.1px;font-weight:bold;color:#f0e4e4;transform-origin:left center;transform:scaleX(0.928);">VEHICLE OWNER</div>
<div class="a" style="left:255.20px;top:361.14px;font-size:4.5px;font-weight:bold;color:#f4eaea;transform-origin:left center;transform:scaleX(0.986);">Job</div>
<div class="a" style="left:410.70px;top:361.14px;font-size:4.5px;font-weight:bold;color:#f4eaea;transform-origin:left center;transform:scaleX(1.029);">Latitude</div>
<div class="a" style="left:461.50px;top:361.14px;font-size:4.5px;font-weight:bold;color:#f4eaea;transform-origin:left center;transform:scaleX(1.034);">Longitude</div>
<div class="a" style="right:98.60px;top:360.70px;font-size:4.1px;font-weight:bold;color:#f0e4e4;transform-origin:right center;transform:scaleX(0.931);">DISTANCE TO JOB</div>
<div class="a" style="left:593.30px;top:361.14px;font-size:4.5px;font-weight:bold;color:#f4eaea;transform-origin:left center;transform:scaleX(1.006);">Last Updated</div>
<div class="a" style="left:8.80px;top:385.05px;width:660.60px;height:0.70px;background:#330a0a"></div>
<div class="a" style="left:13.90px;top:375.91px;font-size:4.6px;font-weight:normal;color:#f2eaea;transform-origin:left center;transform:scaleX(0.990);">D201</div>
<div class="a" style="left:184.20px;top:375.70px;font-size:4.4px;font-weight:normal;color:#f0e6e6;transform-origin:left center;transform:scaleX(0.904);text-decoration:underline;text-decoration-thickness:0.25px;text-underline-offset:0.4px;text-decoration-color:#a08888">Civil</div>
<div class="a" style="left:255.20px;top:373.34px;font-size:4.5px;font-weight:bold;color:#f4eaea;transform-origin:left center;transform:scaleX(0.945);">Unassigned</div>
<div class="a" style="left:255.20px;top:379.00px;font-size:4.1px;font-weight:normal;color:#c09898;transform-origin:left center;transform:scaleX(0.960);">No Job Assigned</div>
<div class="a" style="left:410.70px;top:376.32px;font-size:4.5px;font-weight:normal;color:#f0e6e6;transform-origin:left center;transform:scaleX(1.006);">46.25239</div>
<div class="a" style="left:461.50px;top:376.32px;font-size:4.5px;font-weight:normal;color:#f0e6e6;transform-origin:left center;transform:scaleX(1.018);">-119.09711</div>
<div class="a" style="right:98.60px;top:375.70px;font-size:4.2px;font-weight:normal;color:#f0e6e6;transform-origin:right center;transform:scaleX(0.956);">2.8 mi</div>
<div class="a" style="left:593.30px;top:375.70px;font-size:4.2px;font-weight:normal;color:#e6d8d8;transform-origin:left center;transform:scaleX(0.931);">2025-12-03 07:29:12</div>
<div class="a" style="left:8.80px;top:402.50px;width:660.60px;height:0.70px;background:#330a0a"></div>
<div class="a" style="left:13.90px;top:393.36px;font-size:4.6px;font-weight:normal;color:#f2eaea;transform-origin:left center;transform:scaleX(0.990);">D202</div>
<div class="a" style="left:184.20px;top:393.15px;font-size:4.4px;font-weight:normal;color:#f0e6e6;transform-origin:left center;transform:scaleX(0.904);text-decoration:underline;text-decoration-thickness:0.25px;text-underline-offset:0.4px;text-decoration-color:#a08888">Civil</div>
<div class="a" style="left:255.20px;top:390.79px;font-size:4.5px;font-weight:bold;color:#f4eaea;transform-origin:left center;transform:scaleX(0.950);">24-999</div>
<div class="a" style="left:255.20px;top:396.45px;font-size:4.1px;font-weight:normal;color:#c09898;transform-origin:left center;transform:scaleX(0.960);">South Hill</div>
<div class="a" style="left:410.70px;top:393.77px;font-size:4.5px;font-weight:normal;color:#f0e6e6;transform-origin:left center;transform:scaleX(1.006);">46.15996</div>
<div class="a" style="left:461.50px;top:393.77px;font-size:4.5px;font-weight:normal;color:#f0e6e6;transform-origin:left center;transform:scaleX(1.003);">-119.13229</div>
<div class="a" style="right:98.60px;top:393.15px;font-size:4.2px;font-weight:normal;color:#f0e6e6;transform-origin:right center;transform:scaleX(0.956);">0.1 mi</div>
<div class="a" style="left:593.30px;top:393.15px;font-size:4.2px;font-weight:normal;color:#e6d8d8;transform-origin:left center;transform:scaleX(0.931);">2025-04-10 12:14:34</div>
<div class="a" style="left:8.80px;top:419.95px;width:660.60px;height:0.70px;background:#330a0a"></div>
<div class="a" style="left:13.90px;top:410.81px;font-size:4.6px;font-weight:normal;color:#f2eaea;transform-origin:left center;transform:scaleX(0.990);">D203</div>
<div class="a" style="left:184.20px;top:410.60px;font-size:4.4px;font-weight:normal;color:#f0e6e6;transform-origin:left center;transform:scaleX(0.904);text-decoration:underline;text-decoration-thickness:0.25px;text-underline-offset:0.4px;text-decoration-color:#a08888">Civil</div>
<div class="a" style="left:255.20px;top:408.24px;font-size:4.5px;font-weight:bold;color:#f4eaea;transform-origin:left center;transform:scaleX(0.950);">TCROCK</div>
<div class="a" style="left:255.20px;top:413.90px;font-size:4.1px;font-weight:normal;color:#c09898;transform-origin:left center;transform:scaleX(0.960);">Tri City Rock Products</div>
<div class="a" style="left:410.70px;top:411.22px;font-size:4.5px;font-weight:normal;color:#f0e6e6;transform-origin:left center;transform:scaleX(1.006);">46.15347</div>
<div class="a" style="left:461.50px;top:411.22px;font-size:4.5px;font-weight:normal;color:#f0e6e6;transform-origin:left center;transform:scaleX(1.003);">-119.12375</div>
<div class="a" style="right:98.60px;top:410.60px;font-size:4.2px;font-weight:normal;color:#f0e6e6;transform-origin:right center;transform:scaleX(0.956);">0.2 mi</div>
<div class="a" style="left:593.30px;top:410.60px;font-size:4.2px;font-weight:normal;color:#e6d8d8;transform-origin:left center;transform:scaleX(0.938);">2024-11-27 08:44:04</div>
<div class="a" style="left:8.80px;top:437.40px;width:660.60px;height:0.70px;background:#330a0a"></div>
<div class="a" style="left:13.90px;top:428.26px;font-size:4.6px;font-weight:normal;color:#f2eaea;transform-origin:left center;transform:scaleX(0.990);">D204</div>
<div class="a" style="left:184.20px;top:428.05px;font-size:4.4px;font-weight:normal;color:#f0e6e6;transform-origin:left center;transform:scaleX(0.904);text-decoration:underline;text-decoration-thickness:0.25px;text-underline-offset:0.4px;text-decoration-color:#a08888">Civil</div>
<div class="a" style="left:255.20px;top:425.69px;font-size:4.5px;font-weight:bold;color:#f4eaea;transform-origin:left center;transform:scaleX(0.950);">25-062</div>
<div class="a" style="left:255.20px;top:431.35px;font-size:4.1px;font-weight:normal;color:#c09898;transform-origin:left center;transform:scaleX(0.960);">Levy Golf Club</div>
<div class="a" style="left:410.70px;top:428.67px;font-size:4.5px;font-weight:normal;color:#f0e6e6;transform-origin:left center;transform:scaleX(1.006);">46.28247</div>
<div class="a" style="left:461.50px;top:428.67px;font-size:4.5px;font-weight:normal;color:#f0e6e6;transform-origin:left center;transform:scaleX(1.003);">-118.84042</div>
<div class="a" style="right:98.60px;top:428.05px;font-size:4.2px;font-weight:normal;color:#f0e6e6;transform-origin:right center;transform:scaleX(0.956);">0.3 mi</div>
<div class="a" style="left:593.30px;top:428.05px;font-size:4.2px;font-weight:normal;color:#e6d8d8;transform-origin:left center;transform:scaleX(0.931);">2025-12-03 23:03:13</div>
<div class="a" style="left:8.80px;top:454.85px;width:660.60px;height:0.70px;background:#330a0a"></div>
<div class="a" style="left:13.90px;top:445.71px;font-size:4.6px;font-weight:normal;color:#f2eaea;transform-origin:left center;transform:scaleX(0.990);">D205</div>
<div class="a" style="left:184.20px;top:445.50px;font-size:4.4px;font-weight:normal;color:#f0e6e6;transform-origin:left center;transform:scaleX(0.904);text-decoration:underline;text-decoration-thickness:0.25px;text-underline-offset:0.4px;text-decoration-color:#a08888">Civil</div>
<div class="a" style="left:255.20px;top:443.14px;font-size:4.5px;font-weight:bold;color:#f4eaea;transform-origin:left center;transform:scaleX(0.950);">25-051</div>
<div class="a" style="left:255.20px;top:448.80px;font-size:4.1px;font-weight:normal;color:#c09898;transform-origin:left center;transform:scaleX(0.960);">Bella Vista PH4 (Utilities)</div>
<div class="a" style="left:410.70px;top:446.12px;font-size:4.5px;font-weight:normal;color:#f0e6e6;transform-origin:left center;transform:scaleX(1.006);">46.18871</div>
<div class="a" style="left:461.50px;top:446.12px;font-size:4.5px;font-weight:normal;color:#f0e6e6;transform-origin:left center;transform:scaleX(1.003);">-119.00646</div>
<div class="a" style="right:98.60px;top:445.50px;font-size:4.2px;font-weight:normal;color:#f0e6e6;transform-origin:right center;transform:scaleX(0.956);">0.3 mi</div>
<div class="a" style="left:593.30px;top:445.50px;font-size:4.2px;font-weight:normal;color:#e6d8d8;transform-origin:left center;transform:scaleX(0.946);">2025-11-05 23:44:11</div>
<div class="a" style="left:0.00px;top:457.30px;width:677.90px;height:1.70px;background:#3d3a3a"></div>
</body></html>
